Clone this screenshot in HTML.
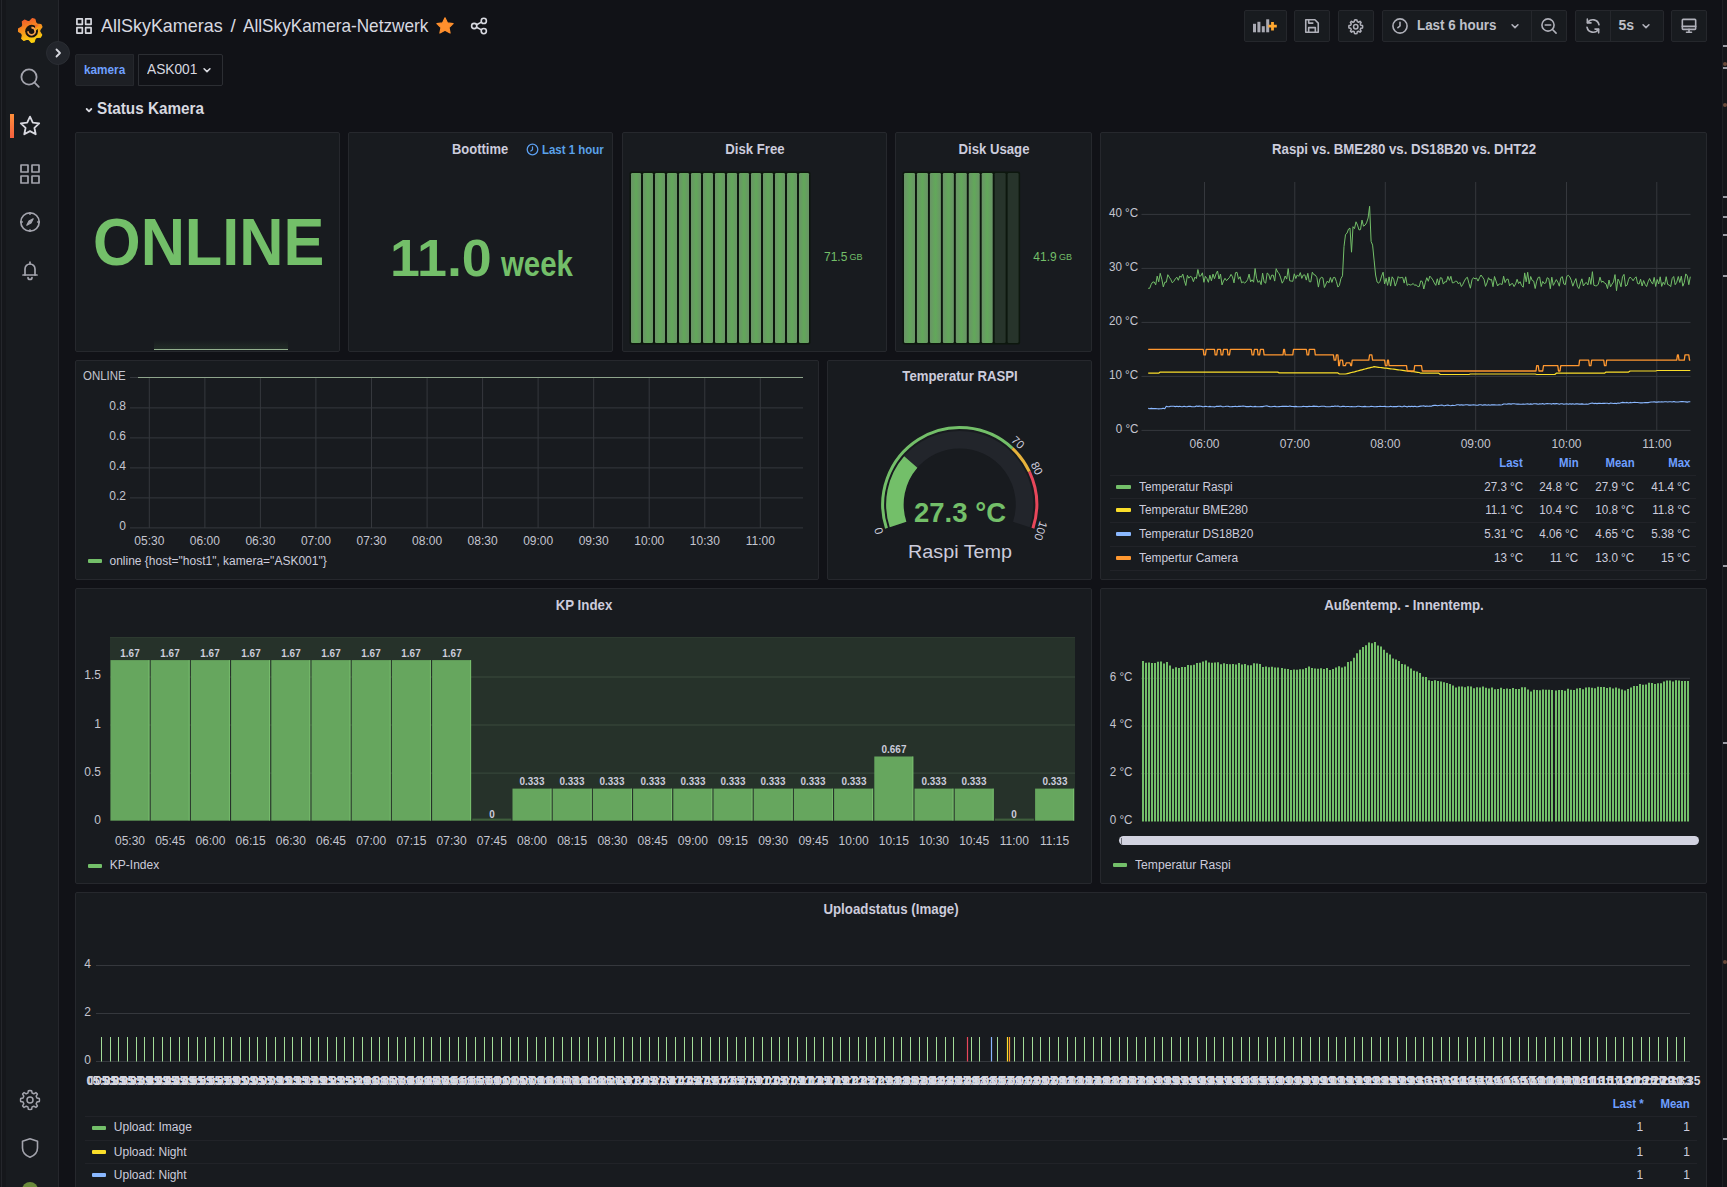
<!DOCTYPE html>
<html><head><meta charset="utf-8"><title>AllSkyKamera-Netzwerk</title>
<style>
html,body{margin:0;padding:0;width:1727px;height:1187px;overflow:hidden;background:#111217;font-family:"Liberation Sans", sans-serif;}
.t{position:absolute;white-space:nowrap;font-family:"Liberation Sans", sans-serif;}
svg{display:block;overflow:visible}
</style></head><body>
<div style="position:absolute;left:0px;top:0px;width:6px;height:1187px;background:#15171b;"></div><div style="position:absolute;left:1px;top:0px;width:1px;height:1187px;background:#24262b;"></div><div style="position:absolute;left:1722px;top:0px;width:5px;height:1187px;background:#141519;"></div><div style="position:absolute;left:1722px;top:0px;width:1px;height:1187px;background:#1f2024;"></div><div style="position:absolute;left:1723px;top:45px;width:4px;height:2px;background:#9a9ba3;"></div><div style="position:absolute;left:1723px;top:67px;width:4px;height:2px;background:#9a9ba3;"></div><div style="position:absolute;left:1723px;top:196px;width:4px;height:2px;background:#9a9ba3;"></div><div style="position:absolute;left:1723px;top:216px;width:4px;height:2px;background:#9a9ba3;"></div><div style="position:absolute;left:1723px;top:234px;width:4px;height:2px;background:#9a9ba3;"></div><div style="position:absolute;left:1723px;top:275px;width:4px;height:2px;background:#9a9ba3;"></div><div style="position:absolute;left:1723px;top:565px;width:4px;height:2px;background:#9a9ba3;"></div><div style="position:absolute;left:1723px;top:742px;width:4px;height:2px;background:#9a9ba3;"></div><div style="position:absolute;left:1723px;top:1138px;width:4px;height:2px;background:#9a9ba3;"></div><div style="position:absolute;left:1723px;top:62px;width:4px;height:4px;background:#6a4a3a;border-radius:2px;"></div><div style="position:absolute;left:1723px;top:103px;width:4px;height:4px;background:#6a4a3a;border-radius:2px;"></div><div style="position:absolute;left:1723px;top:960px;width:4px;height:4px;background:#6a4a3a;border-radius:2px;"></div><div style="position:absolute;left:6px;top:0px;width:52px;height:1187px;background:#181b1f;"></div><div style="position:absolute;left:58px;top:0px;width:1px;height:1187px;background:#25272c;"></div><svg style="position:absolute;left:17.5px;top:17.5px;" width="25" height="25" viewBox="0 0 25 25">
<defs><linearGradient id="lg" x1="0" y1="0" x2="0.3" y2="1">
<stop offset="0" stop-color="#f04e2e"/><stop offset="0.55" stop-color="#f7941d"/><stop offset="1" stop-color="#fcd00e"/></linearGradient></defs>
<path fill="url(#lg)" stroke="url(#lg)" stroke-width="1.2" stroke-linejoin="round" d="M14.29 0.63 L16.89 1.33 L17.74 4.82 L19.32 6.18 L22.89 6.50 L23.97 8.97 L21.77 11.81 L21.70 13.89 L23.67 16.89 L22.41 19.26 L18.82 19.32 L17.15 20.56 L16.03 23.97 L13.39 24.47 L11.11 21.70 L9.10 21.16 L5.74 22.41 L3.70 20.66 L4.44 17.15 L3.61 15.24 L0.53 13.39 L0.63 10.71 L3.84 9.10 L4.82 7.26 L4.34 3.70 L6.50 2.11 L9.76 3.61 L11.81 3.23 Z"/>
<circle cx="13.6" cy="13.2" r="6.4" fill="#1a1410"/>
<path d="M13.6 13.2 m-3.6 0 a3.6 3.6 0 1 0 3.6 -3.6" fill="none" stroke="#f6a04d" stroke-width="1.7"/>
<path d="M13.6 9.6 a3.6 3.6 0 0 1 3.6 3.6" fill="none" stroke="#f6a04d" stroke-width="1.7"/>
<path d="M17.2 13.2 L20 10.5 L20.5 7 L17 6.8 Z" fill="url(#lg)"/>
<circle cx="13.6" cy="13.2" r="1.7" fill="#1a1410"/>
</svg><div style="position:absolute;left:46px;top:41px;width:24px;height:24px;border-radius:50%;background:#22252b;box-sizing:border-box;border:1px solid #2a2d33"></div><svg style="position:absolute;left:52px;top:47px;" width="12" height="12" viewBox="0 0 12 12"><path d="M4.5 2.5 L8 6 L4.5 9.5" fill="none" stroke="#d8d9e0" stroke-width="1.8" stroke-linecap="round" stroke-linejoin="round"/></svg><svg style="position:absolute;left:18.0px;top:66.0px;" width="24" height="24" viewBox="0 0 24 24"><g fill="none" stroke="#a3a4ad" stroke-width="1.80" stroke-linecap="round" stroke-linejoin="round"><circle cx="11" cy="11" r="7.6"/><path d="M16.6 16.6 L20.8 20.8"/></g></svg><div style="position:absolute;left:10px;top:114px;width:4px;height:24px;background:linear-gradient(180deg,#ff8f3a,#f5603f);"></div><svg style="position:absolute;left:18.0px;top:114.0px;" width="24" height="24" viewBox="0 0 24 24"><g fill="none" stroke="#d8d9e0" stroke-width="1.80" stroke-linecap="round" stroke-linejoin="round"><path d="M12 2.6 L14.8 8.6 L21.2 9.4 L16.4 13.8 L17.7 20.3 L12 17.1 L6.3 20.3 L7.6 13.8 L2.8 9.4 L9.2 8.6 Z"/></g></svg><svg style="position:absolute;left:18.0px;top:162.0px;" width="24" height="24" viewBox="0 0 24 24"><g fill="none" stroke="#a3a4ad" stroke-width="1.70" stroke-linecap="round" stroke-linejoin="round"><rect x="3" y="3" width="7" height="7"/><rect x="14" y="3" width="7" height="7"/><rect x="3" y="14" width="7" height="7"/><rect x="14" y="14" width="7" height="7"/></g></svg><svg style="position:absolute;left:18.0px;top:210.0px;" width="24" height="24" viewBox="0 0 24 24"><g fill="none" stroke="#a3a4ad" stroke-width="1.70" stroke-linecap="round" stroke-linejoin="round"><circle cx="12" cy="12" r="9.2"/><path d="M15.2 8.8 L13 13 L8.8 15.2 L11 11 Z" fill="#a3a4ad" stroke-width="1.2"/><path d="M12 2.8 V4.4 M12 19.6 V21.2 M2.8 12 H4.4 M19.6 12 H21.2" stroke-width="1.4"/></g></svg><svg style="position:absolute;left:18.0px;top:258.0px;" width="24" height="24" viewBox="0 0 24 24"><g fill="none" stroke="#a3a4ad" stroke-width="1.70" stroke-linecap="round" stroke-linejoin="round"><path d="M7 17 V11 A5 5 0 0 1 17 11 V17"/><path d="M5 17 H19"/><path d="M10 19.5 A2 2 0 0 0 14 19.5"/><path d="M12 4.2 V6"/></g></svg><svg style="position:absolute;left:18.0px;top:1088.0px;" width="24" height="24" viewBox="0 0 24 24"><g fill="none" stroke="#a3a4ad" stroke-width="1.50" stroke-linecap="round" stroke-linejoin="round"><circle cx="12" cy="12" r="3"/><path d="M12 2.5 L13.6 2.7 L14.1 5 L15.8 5.8 L17.9 4.6 L19.2 5.8 L19.4 6.1 L18.2 8.2 L18.9 9.9 L21.3 10.4 L21.5 12 L21.3 13.6 L18.9 14.1 L18.2 15.8 L19.4 17.9 L18.2 19.2 L17.9 19.4 L15.8 18.2 L14.1 18.9 L13.6 21.3 L12 21.5 L10.4 21.3 L9.9 18.9 L8.2 18.2 L6.1 19.4 L4.8 18.2 L4.6 17.9 L5.8 15.8 L5.1 14.1 L2.7 13.6 L2.5 12 L2.7 10.4 L5.1 9.9 L5.8 8.2 L4.6 6.1 L5.8 4.8 L6.1 4.6 L8.2 5.8 L9.9 5.1 L10.4 2.7 Z"/></g></svg><svg style="position:absolute;left:18.0px;top:1136.0px;" width="24" height="24" viewBox="0 0 24 24"><g fill="none" stroke="#a3a4ad" stroke-width="1.60" stroke-linecap="round" stroke-linejoin="round"><path d="M12 2.8 L19.5 5.2 V12 C19.5 16.5 16.5 19.5 12 21.3 C7.5 19.5 4.5 16.5 4.5 12 V5.2 Z"/></g></svg><div style="position:absolute;left:22px;top:1182px;width:16px;height:16px;border-radius:50%;background:#6a8a3a"></div><svg style="position:absolute;left:74.0px;top:16.0px;" width="20" height="20" viewBox="0 0 24 24"><g fill="none" stroke="#d8d9e0" stroke-width="2.04" stroke-linecap="round" stroke-linejoin="round"><rect x="3.5" y="3.5" width="6.5" height="6.5"/><rect x="14" y="3.5" width="6.5" height="6.5"/><rect x="3.5" y="14" width="6.5" height="6.5"/><rect x="14" y="14" width="6.5" height="6.5"/></g></svg><div class="t" style="top:16.12px;font-size:19px;line-height:19px;color:#d8d9e0;left:101.00px;transform:scaleX(0.945);transform-origin:left center;">AllSkyKameras</div><div class="t" style="top:16.12px;font-size:19px;line-height:19px;color:#d8d9e0;left:230.50px;">/</div><div class="t" style="top:16.12px;font-size:19px;line-height:19px;color:#d8d9e0;left:243.00px;transform:scaleX(0.905);transform-origin:left center;">AllSkyKamera-Netzwerk</div><svg style="position:absolute;left:436px;top:17px;" width="18" height="17" viewBox="0 0 18 17"><path d="M9 0.8 L11.5 5.9 L17.1 6.6 L13 10.5 L14.1 16 L9 13.3 L3.9 16 L5 10.5 L0.9 6.6 L6.5 5.9 Z" fill="#ff8f2d" stroke="#ff8f2d" stroke-width="1.2" stroke-linejoin="round"/></svg><svg style="position:absolute;left:470px;top:17px;" width="18" height="18" viewBox="0 0 18 18"><g fill="none" stroke="#d8d9e0" stroke-width="1.6"><circle cx="13.8" cy="3.9" r="2.6"/><circle cx="4.2" cy="9" r="2.6"/><circle cx="13.8" cy="14.1" r="2.6"/><path d="M6.5 7.8 L11.5 5.1 M6.5 10.2 L11.5 12.9"/></g></svg><div style="position:absolute;left:1244px;top:10px;width:43px;height:32px;box-sizing:border-box;background:#181b1f;border:1px solid #25272c;border-radius:2px;"></div><div style="position:absolute;left:1294px;top:10px;width:36px;height:32px;box-sizing:border-box;background:#181b1f;border:1px solid #25272c;border-radius:2px;"></div><div style="position:absolute;left:1338px;top:10px;width:36px;height:32px;box-sizing:border-box;background:#181b1f;border:1px solid #25272c;border-radius:2px;"></div><div style="position:absolute;left:1382px;top:10px;width:185px;height:32px;box-sizing:border-box;background:#181b1f;border:1px solid #25272c;border-radius:2px;"></div><div style="position:absolute;left:1531px;top:11px;width:1px;height:30px;background:#25272c;"></div><div style="position:absolute;left:1575px;top:10px;width:89px;height:32px;box-sizing:border-box;background:#181b1f;border:1px solid #25272c;border-radius:2px;"></div><div style="position:absolute;left:1610px;top:11px;width:1px;height:30px;background:#25272c;"></div><div style="position:absolute;left:1671px;top:10px;width:36px;height:32px;box-sizing:border-box;background:#181b1f;border:1px solid #25272c;border-radius:2px;"></div><svg style="position:absolute;left:1250px;top:16px;" width="30" height="20" viewBox="0 0 30 20"><g fill="#a9aab3"><rect x="3" y="7.8" width="3" height="8.5"/><rect x="7.4" y="5.8" width="3" height="10.5"/><rect x="11.8" y="10.2" width="3" height="6.1"/><rect x="16.2" y="3.3" width="3" height="13"/></g><path d="M22.5 6 V14.5 M18.3 10.2 H26.8" stroke="#ffa830" stroke-width="2.8"/></svg><svg style="position:absolute;left:1302.0px;top:16.0px;" width="20" height="20" viewBox="0 0 24 24"><g fill="none" stroke="#b0b1ba" stroke-width="1.92" stroke-linecap="round" stroke-linejoin="round"><path d="M4.5 4.5 H15.5 L19.5 8.5 V19.5 H4.5 Z"/><path d="M8 19.5 V14 H16 V19.5"/><path d="M8 4.5 V8.5 H13"/></g></svg><svg style="position:absolute;left:1347.25px;top:17.55px;" width="17.5" height="17.5" viewBox="0 0 24 24"><g fill="none" stroke="#b0b1ba" stroke-width="2.06" stroke-linecap="round" stroke-linejoin="round"><circle cx="12" cy="12" r="3"/><path d="M12 2.5 L13.6 2.7 L14.1 5 L15.8 5.8 L17.9 4.6 L19.4 6.1 L18.2 8.2 L18.9 9.9 L21.3 10.4 L21.5 12 L21.3 13.6 L18.9 14.1 L18.2 15.8 L19.4 17.9 L17.9 19.4 L15.8 18.2 L14.1 18.9 L13.6 21.3 L12 21.5 L10.4 21.3 L9.9 18.9 L8.2 18.2 L6.1 19.4 L4.6 17.9 L5.8 15.8 L5.1 14.1 L2.7 13.6 L2.5 12 L2.7 10.4 L5.1 9.9 L5.8 8.2 L4.6 6.1 L6.1 4.6 L8.2 5.8 L9.9 5.1 L10.4 2.7 Z"/></g></svg><svg style="position:absolute;left:1390.0px;top:16.0px;" width="20" height="20" viewBox="0 0 24 24"><g fill="none" stroke="#b0b1ba" stroke-width="1.92" stroke-linecap="round" stroke-linejoin="round"><circle cx="12" cy="12" r="8.5"/><path d="M12 7.5 V12 L9.5 14"/></g></svg><div class="t" style="top:18.05px;font-size:14px;line-height:14px;color:#bfc0c9;font-weight:700;left:1417.00px;transform:scaleX(0.955);transform-origin:left center;">Last 6 hours</div><svg style="position:absolute;left:1505.0px;top:16.0px;" width="20" height="20" viewBox="0 0 24 24"><g fill="none" stroke="#b0b1ba" stroke-width="1.92" stroke-linecap="round" stroke-linejoin="round"><path d="M8.5 10.5 L12 14 L15.5 10.5"/></g></svg><svg style="position:absolute;left:1539.0px;top:16.0px;" width="20" height="20" viewBox="0 0 24 24"><g fill="none" stroke="#b0b1ba" stroke-width="1.92" stroke-linecap="round" stroke-linejoin="round"><circle cx="10.8" cy="10.8" r="7.3"/><path d="M16.2 16.2 L20.5 20.5 M7.5 10.8 H14"/></g></svg><svg style="position:absolute;left:1583.0px;top:16.0px;" width="20" height="20" viewBox="0 0 24 24"><g fill="none" stroke="#b0b1ba" stroke-width="1.92" stroke-linecap="round" stroke-linejoin="round"><path d="M19.2 10.5 A7.5 7.5 0 0 0 5.5 8 M4.8 13.5 A7.5 7.5 0 0 0 18.5 16"/><path d="M5.2 3.8 V8.3 H9.6 M18.8 20.2 V15.7 H14.4"/></g></svg><div class="t" style="top:18.05px;font-size:14px;line-height:14px;color:#bfc0c9;font-weight:700;left:1618.50px;">5s</div><svg style="position:absolute;left:1636.0px;top:16.0px;" width="20" height="20" viewBox="0 0 24 24"><g fill="none" stroke="#b0b1ba" stroke-width="1.92" stroke-linecap="round" stroke-linejoin="round"><path d="M8.5 10.5 L12 14 L15.5 10.5"/></g></svg><svg style="position:absolute;left:1679.0px;top:16.0px;" width="20" height="20" viewBox="0 0 24 24"><g fill="none" stroke="#b0b1ba" stroke-width="1.92" stroke-linecap="round" stroke-linejoin="round"><rect x="4" y="4" width="16" height="12" rx="1"/><path d="M4 12.5 H20 M9 19.5 H15 M12 16 V19.5"/></g></svg><div style="position:absolute;left:75px;top:54px;width:59px;height:32px;box-sizing:border-box;background:#1d1f24;border:1px solid #25272c;border-radius:2px 0 0 2px;"></div><div class="t" style="top:63.84px;font-size:12px;line-height:12px;color:#6e9fff;font-weight:700;left:84.00px;transform:scaleX(0.98);transform-origin:left center;">kamera</div><div style="position:absolute;left:138px;top:54px;width:85px;height:32px;box-sizing:border-box;background:#111217;border:1px solid #2c2e33;border-radius:0 2px 2px 0;"></div><div class="t" style="top:62.35px;font-size:14px;line-height:14px;color:#d8d9e0;left:147.00px;transform:scaleX(0.98);transform-origin:left center;">ASK001</div><svg style="position:absolute;left:197.0px;top:60.0px;" width="20" height="20" viewBox="0 0 24 24"><g fill="none" stroke="#d8d9e0" stroke-width="1.92" stroke-linecap="round" stroke-linejoin="round"><path d="M8.5 10.5 L12 14 L15.5 10.5"/></g></svg><svg style="position:absolute;left:81.0px;top:102.0px;" width="16" height="16" viewBox="0 0 24 24"><g fill="none" stroke="#d8d9e0" stroke-width="2.70" stroke-linecap="round" stroke-linejoin="round"><path d="M8.5 10.5 L12 14 L15.5 10.5"/></g></svg><div class="t" style="top:101.26px;font-size:16px;line-height:16px;color:#d8d9e0;font-weight:700;left:97.00px;transform:scaleX(0.955);transform-origin:left center;">Status Kamera</div><div style="position:absolute;left:75px;top:132px;width:265px;height:220px;box-sizing:border-box;background:#181b1f;border:1px solid #26282d;border-radius:2px;"></div><div class="t" style="top:209.43px;font-size:66px;line-height:66px;color:#73bf69;font-weight:700;left:93.00px;transform:scaleX(0.928);transform-origin:left center;">ONLINE</div><div style="position:absolute;left:154px;top:340px;width:134px;height:9px;background:linear-gradient(180deg,rgba(115,191,105,0) 0%,rgba(115,191,105,0.10) 100%);"></div><div style="position:absolute;left:153.8px;top:348.7px;width:134.5px;height:1.4px;background:#93b08e;"></div><div style="position:absolute;left:348px;top:132px;width:265px;height:220px;box-sizing:border-box;background:#181b1f;border:1px solid #26282d;border-radius:2px;"></div><div class="t" style="top:142.15px;font-size:14px;line-height:14px;color:#ccccdc;font-weight:700;left:451.50px;transform:scaleX(0.925);transform-origin:left center;">Boottime</div><svg style="position:absolute;left:525.5px;top:143px;" width="13" height="13" viewBox="0 0 13 13"><circle cx="6.5" cy="6.5" r="5.3" fill="none" stroke="#5b9ff0" stroke-width="1.3"/><path d="M6.5 3.8 V6.7 L4.8 8" fill="none" stroke="#5b9ff0" stroke-width="1.2" stroke-linecap="round"/></svg><div class="t" style="top:143.64px;font-size:12px;line-height:12px;color:#5aa2ea;font-weight:700;left:542.00px;transform:scaleX(0.955);transform-origin:left center;">Last 1 hour</div><div class="t" style="top:231.78px;font-size:52px;line-height:52px;color:#73bf69;font-weight:700;left:389.80px;transform:scaleX(1.035);transform-origin:left center;">11.0</div><div class="t" style="top:246.17px;font-size:35px;line-height:35px;color:#73bf69;font-weight:700;left:500.50px;transform:scaleX(0.84);transform-origin:left center;">week</div><div style="position:absolute;left:622px;top:132px;width:265px;height:220px;box-sizing:border-box;background:#181b1f;border:1px solid #26282d;border-radius:2px;"></div><div class="t" style="top:141.95px;font-size:14px;line-height:14px;color:#ccccdc;font-weight:700;left:754.50px;transform:translateX(-50%) scaleX(0.94);transform-origin:center center;">Disk Free</div><svg style="position:absolute;left:631px;top:173px;" width="180" height="170" viewBox="0 0 180 170"><defs><linearGradient id="lcdg" x1="0" y1="0" x2="1" y2="0"><stop offset="0" stop-color="#6a9467"/><stop offset="0.5" stop-color="#62a85a"/><stop offset="1" stop-color="#6a9467"/></linearGradient></defs><rect x="-1.5" y="-1.5" width="181.00" height="173" rx="2" fill="#0d170e"/><rect x="0.00" y="0" width="10" height="170" rx="1.2" fill="url(#lcdg)"/><rect x="12.00" y="0" width="10" height="170" rx="1.2" fill="url(#lcdg)"/><rect x="24.00" y="0" width="10" height="170" rx="1.2" fill="url(#lcdg)"/><rect x="36.00" y="0" width="10" height="170" rx="1.2" fill="url(#lcdg)"/><rect x="48.00" y="0" width="10" height="170" rx="1.2" fill="url(#lcdg)"/><rect x="60.00" y="0" width="10" height="170" rx="1.2" fill="url(#lcdg)"/><rect x="72.00" y="0" width="10" height="170" rx="1.2" fill="url(#lcdg)"/><rect x="84.00" y="0" width="10" height="170" rx="1.2" fill="url(#lcdg)"/><rect x="96.00" y="0" width="10" height="170" rx="1.2" fill="url(#lcdg)"/><rect x="108.00" y="0" width="10" height="170" rx="1.2" fill="url(#lcdg)"/><rect x="120.00" y="0" width="10" height="170" rx="1.2" fill="url(#lcdg)"/><rect x="132.00" y="0" width="10" height="170" rx="1.2" fill="url(#lcdg)"/><rect x="144.00" y="0" width="10" height="170" rx="1.2" fill="url(#lcdg)"/><rect x="156.00" y="0" width="10" height="170" rx="1.2" fill="url(#lcdg)"/><rect x="168.00" y="0" width="10" height="170" rx="1.2" fill="url(#lcdg)"/></svg><div class="t" style="top:250.84px;font-size:12px;line-height:12px;color:#73bf69;left:824.00px;">71.5</div><div class="t" style="top:253.38px;font-size:9px;line-height:9px;color:#73bf69;left:849.50px;">GB</div><div style="position:absolute;left:895px;top:132px;width:197px;height:220px;box-sizing:border-box;background:#181b1f;border:1px solid #26282d;border-radius:2px;"></div><div class="t" style="top:141.95px;font-size:14px;line-height:14px;color:#ccccdc;font-weight:700;left:993.50px;transform:translateX(-50%) scaleX(0.94);transform-origin:center center;">Disk Usage</div><svg style="position:absolute;left:904px;top:173px;" width="117" height="170" viewBox="0 0 117 170"><defs><linearGradient id="lcdg" x1="0" y1="0" x2="1" y2="0"><stop offset="0" stop-color="#6a9467"/><stop offset="0.5" stop-color="#62a85a"/><stop offset="1" stop-color="#6a9467"/></linearGradient></defs><rect x="-1.5" y="-1.5" width="117.60" height="173" rx="2" fill="#0d170e"/><rect x="0.00" y="0" width="11" height="170" rx="1.2" fill="url(#lcdg)"/><rect x="12.95" y="0" width="11" height="170" rx="1.2" fill="url(#lcdg)"/><rect x="25.90" y="0" width="11" height="170" rx="1.2" fill="url(#lcdg)"/><rect x="38.85" y="0" width="11" height="170" rx="1.2" fill="url(#lcdg)"/><rect x="51.80" y="0" width="11" height="170" rx="1.2" fill="url(#lcdg)"/><rect x="64.75" y="0" width="11" height="170" rx="1.2" fill="url(#lcdg)"/><rect x="77.70" y="0" width="11" height="170" rx="1.2" fill="url(#lcdg)"/><rect x="90.65" y="0" width="11" height="170" rx="1.2" fill="#27342b"/><rect x="103.60" y="0" width="11" height="170" rx="1.2" fill="#27342b"/></svg><div class="t" style="top:250.84px;font-size:12px;line-height:12px;color:#73bf69;left:1033.30px;">41.9</div><div class="t" style="top:253.38px;font-size:9px;line-height:9px;color:#73bf69;left:1059.00px;">GB</div><div style="position:absolute;left:1100px;top:132px;width:607px;height:448px;box-sizing:border-box;background:#181b1f;border:1px solid #26282d;border-radius:2px;"></div><div class="t" style="top:141.95px;font-size:14px;line-height:14px;color:#ccccdc;font-weight:700;left:1403.50px;transform:translateX(-50%) scaleX(0.945);transform-origin:center center;">Raspi vs. BME280 vs. DS18B20 vs. DHT22</div><svg style="position:absolute;left:0px;top:0px;pointer-events:none;" width="1727" height="1187" viewBox="0 0 1727 1187"><line x1="1141.5" y1="430.4" x2="1690.5" y2="430.4" stroke="#35383d" stroke-width="1"/><line x1="1141.5" y1="376.4" x2="1690.5" y2="376.4" stroke="#35383d" stroke-width="1"/><line x1="1141.5" y1="322.4" x2="1690.5" y2="322.4" stroke="#35383d" stroke-width="1"/><line x1="1141.5" y1="268.4" x2="1690.5" y2="268.4" stroke="#35383d" stroke-width="1"/><line x1="1141.5" y1="214.4" x2="1690.5" y2="214.4" stroke="#35383d" stroke-width="1"/><line x1="1204.5" y1="182" x2="1204.5" y2="431" stroke="#35383d" stroke-width="1"/><line x1="1294.8" y1="182" x2="1294.8" y2="431" stroke="#35383d" stroke-width="1"/><line x1="1385.3" y1="182" x2="1385.3" y2="431" stroke="#35383d" stroke-width="1"/><line x1="1475.7" y1="182" x2="1475.7" y2="431" stroke="#35383d" stroke-width="1"/><line x1="1566.5" y1="182" x2="1566.5" y2="431" stroke="#35383d" stroke-width="1"/><line x1="1656.8" y1="182" x2="1656.8" y2="431" stroke="#35383d" stroke-width="1"/></svg><div class="t" style="top:422.54px;font-size:12px;line-height:12px;color:#c4c5cf;right:589.00px;transform:scaleX(0.97);transform-origin:right center;">0 °C</div><div class="t" style="top:368.54px;font-size:12px;line-height:12px;color:#c4c5cf;right:589.00px;transform:scaleX(0.97);transform-origin:right center;">10 °C</div><div class="t" style="top:314.54px;font-size:12px;line-height:12px;color:#c4c5cf;right:589.00px;transform:scaleX(0.97);transform-origin:right center;">20 °C</div><div class="t" style="top:260.54px;font-size:12px;line-height:12px;color:#c4c5cf;right:589.00px;transform:scaleX(0.97);transform-origin:right center;">30 °C</div><div class="t" style="top:206.54px;font-size:12px;line-height:12px;color:#c4c5cf;right:589.00px;transform:scaleX(0.97);transform-origin:right center;">40 °C</div><div class="t" style="top:438.04px;font-size:12px;line-height:12px;color:#c4c5cf;left:1204.50px;transform:translateX(-50%);transform-origin:center center;">06:00</div><div class="t" style="top:438.04px;font-size:12px;line-height:12px;color:#c4c5cf;left:1294.80px;transform:translateX(-50%);transform-origin:center center;">07:00</div><div class="t" style="top:438.04px;font-size:12px;line-height:12px;color:#c4c5cf;left:1385.30px;transform:translateX(-50%);transform-origin:center center;">08:00</div><div class="t" style="top:438.04px;font-size:12px;line-height:12px;color:#c4c5cf;left:1475.70px;transform:translateX(-50%);transform-origin:center center;">09:00</div><div class="t" style="top:438.04px;font-size:12px;line-height:12px;color:#c4c5cf;left:1566.50px;transform:translateX(-50%);transform-origin:center center;">10:00</div><div class="t" style="top:438.04px;font-size:12px;line-height:12px;color:#c4c5cf;left:1656.80px;transform:translateX(-50%);transform-origin:center center;">11:00</div><svg style="position:absolute;left:0px;top:0px;pointer-events:none;" width="1727" height="1187" viewBox="0 0 1727 1187"><polyline points="1148.2,408.4 1149.7,408.8 1151.2,408.4 1152.7,408.6 1154.2,408.6 1155.7,408.6 1157.2,408.7 1158.7,408.9 1160.2,408.7 1161.8,408.6 1163.3,408.2 1164.8,408.8 1166.3,406.2 1167.8,406.7 1169.3,406.6 1170.8,406.3 1172.3,406.3 1173.8,406.3 1175.3,406.6 1176.8,406.3 1178.3,406.6 1179.8,406.3 1181.3,406.7 1182.8,406.6 1184.3,406.3 1185.8,406.8 1187.4,406.6 1188.9,406.3 1190.4,406.4 1191.9,406.8 1193.4,406.8 1194.9,406.8 1196.4,406.0 1197.9,406.4 1199.4,406.1 1200.9,406.3 1202.4,406.6 1203.9,406.7 1205.4,406.2 1206.9,406.5 1208.4,406.7 1209.9,406.4 1211.4,406.7 1213.0,406.7 1214.5,406.9 1216.0,406.4 1217.5,406.3 1219.0,406.4 1220.5,406.0 1222.0,406.6 1223.5,406.7 1225.0,406.5 1226.5,406.2 1228.0,406.2 1229.5,406.6 1231.0,406.7 1232.5,406.6 1234.0,406.5 1235.5,406.3 1237.0,406.7 1238.5,406.3 1240.1,406.4 1241.6,406.3 1243.1,406.1 1244.6,406.2 1246.1,406.6 1247.6,406.6 1249.1,406.6 1250.6,406.3 1252.1,406.8 1253.6,406.7 1255.1,406.4 1256.6,406.7 1258.1,406.8 1259.6,406.8 1261.1,406.5 1262.6,406.6 1264.1,406.2 1265.7,406.0 1267.2,405.9 1268.7,406.4 1270.2,406.8 1271.7,406.8 1273.2,406.5 1274.7,406.4 1276.2,406.6 1277.7,406.7 1279.2,406.6 1280.7,406.5 1282.2,406.4 1283.7,406.4 1285.2,406.3 1286.7,406.4 1288.2,406.5 1289.7,406.0 1291.3,406.4 1292.8,406.5 1294.3,406.6 1295.8,406.4 1297.3,406.7 1298.8,406.7 1300.3,406.7 1301.8,406.8 1303.3,406.3 1304.8,406.5 1306.3,406.6 1307.8,406.6 1309.3,406.2 1310.8,406.5 1312.3,406.4 1313.8,406.1 1315.3,406.4 1316.9,406.2 1318.4,406.8 1319.9,406.5 1321.4,406.3 1322.9,406.3 1324.4,406.3 1325.9,406.8 1327.4,406.7 1328.9,406.8 1330.4,406.7 1331.9,406.2 1333.4,406.5 1334.9,406.0 1336.4,406.3 1337.9,406.0 1339.4,406.6 1340.9,406.7 1342.5,406.4 1344.0,406.2 1345.5,406.8 1347.0,406.5 1348.5,406.5 1350.0,406.7 1351.5,406.6 1353.0,406.8 1354.5,406.7 1356.0,406.7 1357.5,406.2 1359.0,406.2 1360.5,406.5 1362.0,406.8 1363.5,406.6 1365.0,406.4 1366.5,406.7 1368.1,406.7 1369.6,406.7 1371.1,406.3 1372.6,406.5 1374.1,406.8 1375.6,406.8 1377.1,406.6 1378.6,406.5 1380.1,406.2 1381.6,406.5 1383.1,406.5 1384.6,406.4 1386.1,406.6 1387.6,406.7 1389.1,406.7 1390.6,406.2 1392.1,406.7 1393.7,406.5 1395.2,406.6 1396.7,406.6 1398.2,406.3 1399.7,406.2 1401.2,406.6 1402.7,406.7 1404.2,406.1 1405.7,406.5 1407.2,406.9 1408.7,406.3 1410.2,406.6 1411.7,406.3 1413.2,406.6 1414.7,406.3 1416.2,406.6 1417.7,406.8 1419.2,406.4 1420.8,406.1 1422.3,406.0 1423.8,405.8 1425.3,406.4 1426.8,406.0 1428.3,406.2 1429.8,406.1 1431.3,406.3 1432.8,405.6 1434.3,405.4 1435.8,405.2 1437.3,405.7 1438.8,405.5 1440.3,405.3 1441.8,405.1 1443.3,405.6 1444.8,405.7 1446.4,405.2 1447.9,405.1 1449.4,405.5 1450.9,405.7 1452.4,405.2 1453.9,405.5 1455.4,405.2 1456.9,404.8 1458.4,404.7 1459.9,405.1 1461.4,404.7 1462.9,405.1 1464.4,405.0 1465.9,404.7 1467.4,404.7 1468.9,405.1 1470.4,405.1 1472.0,405.0 1473.5,404.9 1475.0,405.0 1476.5,405.2 1478.0,405.1 1479.5,404.8 1481.0,404.7 1482.5,405.2 1484.0,404.9 1485.5,404.7 1487.0,405.2 1488.5,404.7 1490.0,405.2 1491.5,404.8 1493.0,404.9 1494.5,404.8 1496.0,405.0 1497.6,405.0 1499.1,404.9 1500.6,405.0 1502.1,404.8 1503.6,404.0 1505.1,404.0 1506.6,404.2 1508.1,403.9 1509.6,403.9 1511.1,404.1 1512.6,403.8 1514.1,403.8 1515.6,404.0 1517.1,404.1 1518.6,404.0 1520.1,404.2 1521.6,404.2 1523.2,404.0 1524.7,404.2 1526.2,404.0 1527.7,403.9 1529.2,404.2 1530.7,403.9 1532.2,404.2 1533.7,403.8 1535.2,403.8 1536.7,403.9 1538.2,404.2 1539.7,403.9 1541.2,404.0 1542.7,403.6 1544.2,404.2 1545.7,403.7 1547.2,403.6 1548.8,403.8 1550.3,403.7 1551.8,404.1 1553.3,403.6 1554.8,403.9 1556.3,403.6 1557.8,403.7 1559.3,404.2 1560.8,403.8 1562.3,403.7 1563.8,404.2 1565.3,404.0 1566.8,403.8 1568.3,404.2 1569.8,403.7 1571.3,404.1 1572.8,403.7 1574.4,404.2 1575.9,403.9 1577.4,403.7 1578.9,404.1 1580.4,404.1 1581.9,403.9 1583.4,404.1 1584.9,404.2 1586.4,404.1 1587.9,404.2 1589.4,403.7 1590.9,403.3 1592.4,403.1 1593.9,403.6 1595.4,403.2 1596.9,403.6 1598.4,403.4 1600.0,403.3 1601.5,403.5 1603.0,403.2 1604.5,403.4 1606.0,403.3 1607.5,403.2 1609.0,403.7 1610.5,403.1 1612.0,403.3 1613.5,403.5 1615.0,403.2 1616.5,403.6 1618.0,403.1 1619.5,403.3 1621.0,402.7 1622.5,402.4 1624.0,402.6 1625.5,402.8 1627.1,402.4 1628.6,402.9 1630.1,402.4 1631.6,402.7 1633.1,402.5 1634.6,402.3 1636.1,402.5 1637.6,402.5 1639.1,402.7 1640.6,402.9 1642.1,402.9 1643.6,402.8 1645.1,402.5 1646.6,402.6 1648.1,402.6 1649.6,402.3 1651.1,402.0 1652.7,402.0 1654.2,401.7 1655.7,402.1 1657.2,402.1 1658.7,401.9 1660.2,402.0 1661.7,401.9 1663.2,402.0 1664.7,401.7 1666.2,401.7 1667.7,402.0 1669.2,401.7 1670.7,401.8 1672.2,402.0 1673.7,401.5 1675.2,401.9 1676.7,402.0 1678.3,402.0 1679.8,401.7 1681.3,401.5 1682.8,401.6 1684.3,401.8 1685.8,401.9 1687.3,402.1 1688.8,401.7 1690.3,401.7" fill="none" stroke="#8ab8ff" stroke-width="1.1" stroke-linejoin="round"/><polyline points="1148.2,373.2 1149.7,373.2 1151.2,373.2 1152.7,373.2 1154.2,373.2 1155.7,373.2 1157.2,373.2 1158.7,373.2 1160.2,372.1 1161.8,372.1 1163.3,372.1 1164.8,372.1 1166.3,372.1 1167.8,372.1 1169.3,372.1 1170.8,372.1 1172.3,372.1 1173.8,372.1 1175.3,372.1 1176.8,372.1 1178.3,372.1 1179.8,372.1 1181.3,372.1 1182.8,372.1 1184.3,372.1 1185.8,372.1 1187.4,372.1 1188.9,372.1 1190.4,372.1 1191.9,372.1 1193.4,372.1 1194.9,372.1 1196.4,372.1 1197.9,372.1 1199.4,372.1 1200.9,372.1 1202.4,372.1 1203.9,372.1 1205.4,372.1 1206.9,372.1 1208.4,372.1 1209.9,372.1 1211.4,372.1 1213.0,372.1 1214.5,372.1 1216.0,372.1 1217.5,372.1 1219.0,372.1 1220.5,372.1 1222.0,372.1 1223.5,372.1 1225.0,372.1 1226.5,372.1 1228.0,372.1 1229.5,372.1 1231.0,372.1 1232.5,372.1 1234.0,372.1 1235.5,372.1 1237.0,372.1 1238.5,372.1 1240.1,372.1 1241.6,372.1 1243.1,372.1 1244.6,372.1 1246.1,372.1 1247.6,372.1 1249.1,372.1 1250.6,372.1 1252.1,372.1 1253.6,372.1 1255.1,372.1 1256.6,372.1 1258.1,372.1 1259.6,372.1 1261.1,372.1 1262.6,372.1 1264.1,372.1 1265.7,372.1 1267.2,372.1 1268.7,372.1 1270.2,372.1 1271.7,372.1 1273.2,372.1 1274.7,372.1 1276.2,372.1 1277.7,372.1 1279.2,372.9 1280.7,372.9 1282.2,372.9 1283.7,372.9 1285.2,372.9 1286.7,372.9 1288.2,372.9 1289.7,372.9 1291.3,372.9 1292.8,372.9 1294.3,372.9 1295.8,372.9 1297.3,372.9 1298.8,372.9 1300.3,372.9 1301.8,372.9 1303.3,372.9 1304.8,372.9 1306.3,372.9 1307.8,372.9 1309.3,372.9 1310.8,372.9 1312.3,372.9 1313.8,372.9 1315.3,372.9 1316.9,372.9 1318.4,372.9 1319.9,372.9 1321.4,372.9 1322.9,372.9 1324.4,372.9 1325.9,372.9 1327.4,372.9 1328.9,372.9 1330.4,372.9 1331.9,372.9 1333.4,372.9 1334.9,372.9 1336.4,372.9 1337.9,372.9 1339.4,374.0 1340.9,374.0 1342.5,374.0 1344.0,374.0 1345.5,374.0 1347.0,373.7 1348.5,373.3 1350.0,372.9 1351.5,372.5 1353.0,372.1 1354.5,371.8 1356.0,371.4 1357.5,371.0 1359.0,370.6 1360.5,370.2 1362.0,369.8 1363.5,369.4 1365.0,369.0 1366.5,368.6 1368.1,368.2 1369.6,367.8 1371.1,367.4 1372.6,367.1 1374.1,366.7 1375.6,366.9 1377.1,367.1 1378.6,367.3 1380.1,367.5 1381.6,367.7 1383.1,367.9 1384.6,368.1 1386.1,368.2 1387.6,368.4 1389.1,368.6 1390.6,368.8 1392.1,369.0 1393.7,369.2 1395.2,369.4 1396.7,369.6 1398.2,369.8 1399.7,370.0 1401.2,370.2 1402.7,370.4 1404.2,370.6 1405.7,370.8 1407.2,371.0 1408.7,371.2 1410.2,371.4 1411.7,371.6 1413.2,371.7 1414.7,371.9 1416.2,372.1 1417.7,372.3 1419.2,372.5 1420.8,373.2 1422.3,373.2 1423.8,373.2 1425.3,373.2 1426.8,373.2 1428.3,373.2 1429.8,373.2 1431.3,373.2 1432.8,373.2 1434.3,373.2 1435.8,373.2 1437.3,373.2 1438.8,373.2 1440.3,374.5 1441.8,374.5 1443.3,374.5 1444.8,374.5 1446.4,374.5 1447.9,374.5 1449.4,374.5 1450.9,374.5 1452.4,374.5 1453.9,374.5 1455.4,374.5 1456.9,374.5 1458.4,374.5 1459.9,374.5 1461.4,374.5 1462.9,374.5 1464.4,374.5 1465.9,374.5 1467.4,374.5 1468.9,374.5 1470.4,374.0 1472.0,374.0 1473.5,374.0 1475.0,374.0 1476.5,374.0 1478.0,374.0 1479.5,374.0 1481.0,374.0 1482.5,374.0 1484.0,374.0 1485.5,374.0 1487.0,374.0 1488.5,374.0 1490.0,374.0 1491.5,374.0 1493.0,374.0 1494.5,374.0 1496.0,374.0 1497.6,374.0 1499.1,374.0 1500.6,374.0 1502.1,374.0 1503.6,374.0 1505.1,374.0 1506.6,374.0 1508.1,374.0 1509.6,374.0 1511.1,374.0 1512.6,374.0 1514.1,374.0 1515.6,374.0 1517.1,374.0 1518.6,374.0 1520.1,374.0 1521.6,374.0 1523.2,374.0 1524.7,374.0 1526.2,374.0 1527.7,374.0 1529.2,374.0 1530.7,374.0 1532.2,374.0 1533.7,374.0 1535.2,374.0 1536.7,374.5 1538.2,374.5 1539.7,374.5 1541.2,374.5 1542.7,374.5 1544.2,374.5 1545.7,374.5 1547.2,374.5 1548.8,374.5 1550.3,374.5 1551.8,374.5 1553.3,374.5 1554.8,374.5 1556.3,373.2 1557.8,373.2 1559.3,373.2 1560.8,373.2 1562.3,373.2 1563.8,373.2 1565.3,373.2 1566.8,373.2 1568.3,373.2 1569.8,373.2 1571.3,373.2 1572.8,373.2 1574.4,373.2 1575.9,373.2 1577.4,373.2 1578.9,373.2 1580.4,373.2 1581.9,373.2 1583.4,373.2 1584.9,373.2 1586.4,373.2 1587.9,373.2 1589.4,373.2 1590.9,373.2 1592.4,373.2 1593.9,373.2 1595.4,373.2 1596.9,373.2 1598.4,373.2 1600.0,373.2 1601.5,373.2 1603.0,373.2 1604.5,373.2 1606.0,372.1 1607.5,372.1 1609.0,372.1 1610.5,372.1 1612.0,372.1 1613.5,372.1 1615.0,372.1 1616.5,372.1 1618.0,372.1 1619.5,372.1 1621.0,372.1 1622.5,372.1 1624.0,372.1 1625.5,372.1 1627.1,372.1 1628.6,372.1 1630.1,371.0 1631.6,371.0 1633.1,371.0 1634.6,371.0 1636.1,371.0 1637.6,371.0 1639.1,371.0 1640.6,371.0 1642.1,371.0 1643.6,371.0 1645.1,371.0 1646.6,371.0 1648.1,371.0 1649.6,371.0 1651.1,371.0 1652.7,371.0 1654.2,371.0 1655.7,371.0 1657.2,370.5 1658.7,370.5 1660.2,370.5 1661.7,370.5 1663.2,370.5 1664.7,370.5 1666.2,370.5 1667.7,370.5 1669.2,370.5 1670.7,370.5 1672.2,370.5 1673.7,370.5 1675.2,370.5 1676.7,370.5 1678.3,370.5 1679.8,370.5 1681.3,370.5 1682.8,370.5 1684.3,370.5 1685.8,370.5 1687.3,370.5 1688.8,370.5 1690.3,370.5" fill="none" stroke="#fade2a" stroke-width="1.2" stroke-linejoin="round"/><polyline points="1148.2,349.4 1149.0,349.4 1149.7,349.4 1150.5,349.4 1151.2,349.4 1152.0,349.4 1152.7,349.4 1153.5,349.4 1154.2,349.4 1155.0,349.4 1155.7,349.4 1156.5,349.4 1157.2,349.4 1158.0,349.4 1158.7,349.4 1159.5,349.4 1160.2,349.4 1161.0,349.4 1161.8,349.4 1162.5,349.4 1163.3,349.4 1164.0,349.4 1164.8,349.4 1165.5,349.4 1166.3,349.4 1167.0,349.4 1167.8,349.4 1168.5,349.4 1169.3,349.4 1170.0,349.4 1170.8,349.4 1171.5,349.4 1172.3,349.4 1173.0,349.4 1173.8,349.4 1174.6,349.4 1175.3,349.4 1176.1,349.4 1176.8,349.4 1177.6,349.4 1178.3,349.4 1179.1,349.4 1179.8,349.4 1180.6,349.4 1181.3,349.4 1182.1,349.4 1182.8,349.4 1183.6,349.4 1184.3,349.4 1185.1,349.4 1185.8,349.4 1186.6,349.4 1187.4,349.4 1188.1,349.4 1188.9,349.4 1189.6,349.4 1190.4,349.4 1191.1,349.4 1191.9,349.4 1192.6,349.4 1193.4,349.4 1194.1,349.4 1194.9,349.4 1195.6,349.4 1196.4,349.4 1197.1,349.4 1197.9,349.4 1198.6,349.4 1199.4,349.4 1200.2,349.4 1200.9,349.4 1201.7,349.4 1202.4,349.4 1203.2,349.4 1203.9,354.8 1204.7,354.8 1205.4,354.8 1206.2,349.4 1206.9,349.4 1207.7,349.4 1208.4,349.4 1209.2,349.4 1209.9,349.4 1210.7,349.4 1211.4,349.4 1212.2,349.4 1213.0,349.4 1213.7,349.4 1214.5,349.4 1215.2,354.8 1216.0,354.8 1216.7,354.8 1217.5,349.4 1218.2,349.4 1219.0,349.4 1219.7,349.4 1220.5,349.4 1221.2,354.8 1222.0,354.8 1222.7,354.8 1223.5,349.4 1224.2,349.4 1225.0,349.4 1225.8,349.4 1226.5,349.4 1227.3,349.4 1228.0,354.8 1228.8,354.8 1229.5,354.8 1230.3,349.4 1231.0,349.4 1231.8,349.4 1232.5,349.4 1233.3,349.4 1234.0,349.4 1234.8,349.4 1235.5,349.4 1236.3,349.4 1237.0,349.4 1237.8,349.4 1238.5,349.4 1239.3,349.4 1240.1,349.4 1240.8,349.4 1241.6,349.4 1242.3,349.4 1243.1,349.4 1243.8,349.4 1244.6,349.4 1245.3,349.4 1246.1,349.4 1246.8,349.4 1247.6,349.4 1248.3,349.4 1249.1,349.4 1249.8,349.4 1250.6,349.4 1251.3,349.4 1252.1,354.8 1252.9,354.8 1253.6,354.8 1254.4,349.4 1255.1,349.4 1255.9,349.4 1256.6,349.4 1257.4,349.4 1258.1,354.8 1258.9,354.8 1259.6,354.8 1260.4,349.4 1261.1,349.4 1261.9,349.4 1262.6,349.4 1263.4,349.4 1264.1,354.8 1264.9,354.8 1265.7,354.8 1266.4,354.8 1267.2,354.8 1267.9,354.8 1268.7,354.8 1269.4,354.8 1270.2,354.8 1270.9,354.8 1271.7,354.8 1272.4,354.8 1273.2,354.8 1273.9,354.8 1274.7,354.8 1275.4,354.8 1276.2,354.8 1276.9,354.8 1277.7,354.8 1278.5,354.8 1279.2,354.8 1280.0,354.8 1280.7,354.8 1281.5,354.8 1282.2,354.8 1283.0,354.8 1283.7,349.4 1284.5,349.4 1285.2,354.8 1286.0,354.8 1286.7,354.8 1287.5,354.8 1288.2,354.8 1289.0,354.8 1289.7,354.8 1290.5,354.8 1291.3,354.8 1292.0,354.8 1292.8,354.8 1293.5,349.4 1294.3,349.4 1295.0,349.4 1295.8,349.4 1296.5,349.4 1297.3,349.4 1298.0,349.4 1298.8,349.4 1299.5,349.4 1300.3,349.4 1301.0,349.4 1301.8,349.4 1302.5,349.4 1303.3,349.4 1304.1,349.4 1304.8,349.4 1305.6,349.4 1306.3,349.4 1307.1,354.8 1307.8,354.8 1308.6,354.8 1309.3,349.4 1310.1,349.4 1310.8,349.4 1311.6,349.4 1312.3,349.4 1313.1,349.4 1313.8,349.4 1314.6,349.4 1315.3,354.8 1316.1,354.8 1316.9,354.8 1317.6,354.8 1318.4,354.8 1319.1,354.8 1319.9,354.8 1320.6,354.8 1321.4,354.8 1322.1,354.8 1322.9,354.8 1323.6,354.8 1324.4,354.8 1325.1,354.8 1325.9,354.8 1326.6,354.8 1327.4,354.8 1328.1,354.8 1328.9,354.8 1329.7,354.8 1330.4,354.8 1331.2,354.8 1331.9,354.8 1332.7,354.8 1333.4,354.8 1334.2,360.2 1334.9,360.2 1335.7,360.2 1336.4,354.8 1337.2,354.8 1337.9,354.8 1338.7,365.6 1339.4,365.6 1340.2,360.2 1340.9,360.2 1341.7,360.2 1342.5,360.2 1343.2,365.6 1344.0,365.6 1344.7,365.6 1345.5,365.6 1346.2,362.9 1347.0,362.9 1347.7,362.9 1348.5,362.9 1349.2,362.9 1350.0,362.9 1350.7,365.6 1351.5,365.6 1352.2,360.2 1353.0,360.2 1353.7,360.2 1354.5,360.2 1355.3,360.2 1356.0,360.2 1356.8,360.2 1357.5,360.2 1358.3,360.2 1359.0,360.2 1359.8,360.2 1360.5,360.2 1361.3,360.2 1362.0,360.2 1362.8,360.2 1363.5,360.2 1364.3,360.2 1365.0,360.2 1365.8,360.2 1366.5,360.2 1367.3,360.2 1368.1,360.2 1368.8,360.2 1369.6,354.8 1370.3,354.8 1371.1,354.8 1371.8,354.8 1372.6,360.2 1373.3,360.2 1374.1,360.2 1374.8,360.2 1375.6,360.2 1376.3,360.2 1377.1,360.2 1377.8,360.2 1378.6,360.2 1379.3,360.2 1380.1,360.2 1380.9,360.2 1381.6,360.2 1382.4,360.2 1383.1,360.2 1383.9,360.2 1384.6,360.2 1385.4,365.6 1386.1,365.6 1386.9,365.6 1387.6,360.2 1388.4,360.2 1389.1,365.6 1389.9,365.6 1390.6,365.6 1391.4,365.6 1392.1,365.6 1392.9,365.6 1393.7,365.6 1394.4,365.6 1395.2,365.6 1395.9,365.6 1396.7,365.6 1397.4,365.6 1398.2,365.6 1398.9,365.6 1399.7,365.6 1400.4,365.6 1401.2,365.6 1401.9,365.6 1402.7,365.6 1403.4,365.6 1404.2,365.6 1404.9,365.6 1405.7,365.6 1406.5,365.6 1407.2,371.0 1408.0,371.0 1408.7,371.0 1409.5,371.0 1410.2,371.0 1411.0,371.0 1411.7,371.0 1412.5,371.0 1413.2,371.0 1414.0,371.0 1414.7,365.6 1415.5,365.6 1416.2,365.6 1417.0,365.6 1417.7,365.6 1418.5,365.6 1419.2,365.6 1420.0,365.6 1420.8,365.6 1421.5,365.6 1422.3,371.0 1423.0,371.0 1423.8,371.0 1424.5,371.0 1425.3,371.0 1426.0,371.0 1426.8,371.0 1427.5,371.0 1428.3,371.0 1429.0,371.0 1429.8,371.0 1430.5,371.0 1431.3,371.0 1432.0,371.0 1432.8,371.0 1433.6,371.0 1434.3,371.0 1435.1,371.0 1435.8,371.0 1436.6,371.0 1437.3,371.0 1438.1,371.0 1438.8,371.0 1439.6,371.0 1440.3,371.0 1441.1,371.0 1441.8,371.0 1442.6,371.0 1443.3,371.0 1444.1,371.0 1444.8,371.0 1445.6,371.0 1446.4,371.0 1447.1,371.0 1447.9,371.0 1448.6,371.0 1449.4,371.0 1450.1,371.0 1450.9,371.0 1451.6,371.0 1452.4,371.0 1453.1,371.0 1453.9,371.0 1454.6,371.0 1455.4,371.0 1456.1,371.0 1456.9,371.0 1457.6,371.0 1458.4,371.0 1459.2,371.0 1459.9,371.0 1460.7,371.0 1461.4,371.0 1462.2,371.0 1462.9,371.0 1463.7,371.0 1464.4,371.0 1465.2,371.0 1465.9,371.0 1466.7,371.0 1467.4,371.0 1468.2,371.0 1468.9,371.0 1469.7,371.0 1470.4,371.0 1471.2,371.0 1472.0,371.0 1472.7,371.0 1473.5,371.0 1474.2,371.0 1475.0,371.0 1475.7,371.0 1476.5,371.0 1477.2,371.0 1478.0,371.0 1478.7,371.0 1479.5,371.0 1480.2,371.0 1481.0,371.0 1481.7,371.0 1482.5,371.0 1483.2,371.0 1484.0,371.0 1484.8,371.0 1485.5,371.0 1486.3,371.0 1487.0,371.0 1487.8,371.0 1488.5,371.0 1489.3,371.0 1490.0,371.0 1490.8,371.0 1491.5,371.0 1492.3,371.0 1493.0,371.0 1493.8,371.0 1494.5,371.0 1495.3,371.0 1496.0,371.0 1496.8,371.0 1497.6,371.0 1498.3,371.0 1499.1,371.0 1499.8,371.0 1500.6,371.0 1501.3,371.0 1502.1,371.0 1502.8,371.0 1503.6,371.0 1504.3,371.0 1505.1,371.0 1505.8,371.0 1506.6,371.0 1507.3,371.0 1508.1,371.0 1508.8,371.0 1509.6,371.0 1510.4,371.0 1511.1,371.0 1511.9,371.0 1512.6,371.0 1513.4,371.0 1514.1,371.0 1514.9,371.0 1515.6,371.0 1516.4,371.0 1517.1,371.0 1517.9,371.0 1518.6,371.0 1519.4,371.0 1520.1,371.0 1520.9,371.0 1521.6,371.0 1522.4,371.0 1523.2,371.0 1523.9,371.0 1524.7,371.0 1525.4,371.0 1526.2,371.0 1526.9,371.0 1527.7,371.0 1528.4,371.0 1529.2,371.0 1529.9,371.0 1530.7,371.0 1531.4,371.0 1532.2,371.0 1532.9,371.0 1533.7,371.0 1534.4,371.0 1535.2,371.0 1536.0,371.0 1536.7,365.6 1537.5,365.6 1538.2,365.6 1539.0,371.0 1539.7,371.0 1540.5,371.0 1541.2,371.0 1542.0,371.0 1542.7,371.0 1543.5,365.6 1544.2,365.6 1545.0,365.6 1545.7,365.6 1546.5,365.6 1547.2,365.6 1548.0,365.6 1548.8,365.6 1549.5,365.6 1550.3,365.6 1551.0,365.6 1551.8,365.6 1552.5,365.6 1553.3,365.6 1554.0,365.6 1554.8,365.6 1555.5,365.6 1556.3,365.6 1557.0,365.6 1557.8,365.6 1558.5,371.0 1559.3,371.0 1560.0,371.0 1560.8,365.6 1561.6,365.6 1562.3,365.6 1563.1,365.6 1563.8,365.6 1564.6,365.6 1565.3,365.6 1566.1,365.6 1566.8,365.6 1567.6,365.6 1568.3,365.6 1569.1,365.6 1569.8,365.6 1570.6,365.6 1571.3,365.6 1572.1,365.6 1572.8,365.6 1573.6,365.6 1574.4,365.6 1575.1,365.6 1575.9,365.6 1576.6,365.6 1577.4,365.6 1578.1,365.6 1578.9,365.6 1579.6,360.2 1580.4,360.2 1581.1,360.2 1581.9,360.2 1582.6,360.2 1583.4,360.2 1584.1,360.2 1584.9,360.2 1585.6,360.2 1586.4,360.2 1587.2,360.2 1587.9,360.2 1588.7,360.2 1589.4,365.6 1590.2,365.6 1590.9,365.6 1591.7,360.2 1592.4,360.2 1593.2,360.2 1593.9,360.2 1594.7,360.2 1595.4,360.2 1596.2,360.2 1596.9,360.2 1597.7,360.2 1598.4,360.2 1599.2,360.2 1600.0,360.2 1600.7,360.2 1601.5,360.2 1602.2,360.2 1603.0,360.2 1603.7,360.2 1604.5,365.6 1605.2,365.6 1606.0,365.6 1606.7,360.2 1607.5,360.2 1608.2,360.2 1609.0,360.2 1609.7,360.2 1610.5,360.2 1611.2,360.2 1612.0,360.2 1612.7,360.2 1613.5,360.2 1614.3,360.2 1615.0,360.2 1615.8,360.2 1616.5,360.2 1617.3,360.2 1618.0,360.2 1618.8,360.2 1619.5,360.2 1620.3,360.2 1621.0,360.2 1621.8,360.2 1622.5,360.2 1623.3,360.2 1624.0,360.2 1624.8,360.2 1625.5,360.2 1626.3,360.2 1627.1,360.2 1627.8,360.2 1628.6,360.2 1629.3,360.2 1630.1,360.2 1630.8,360.2 1631.6,360.2 1632.3,360.2 1633.1,360.2 1633.8,360.2 1634.6,360.2 1635.3,360.2 1636.1,360.2 1636.8,360.2 1637.6,360.2 1638.3,360.2 1639.1,360.2 1639.9,360.2 1640.6,360.2 1641.4,360.2 1642.1,360.2 1642.9,360.2 1643.6,360.2 1644.4,360.2 1645.1,360.2 1645.9,360.2 1646.6,360.2 1647.4,360.2 1648.1,360.2 1648.9,360.2 1649.6,360.2 1650.4,360.2 1651.1,360.2 1651.9,360.2 1652.7,360.2 1653.4,360.2 1654.2,360.2 1654.9,360.2 1655.7,360.2 1656.4,360.2 1657.2,360.2 1657.9,360.2 1658.7,360.2 1659.4,360.2 1660.2,360.2 1660.9,360.2 1661.7,360.2 1662.4,360.2 1663.2,360.2 1663.9,360.2 1664.7,360.2 1665.5,360.2 1666.2,360.2 1667.0,360.2 1667.7,360.2 1668.5,360.2 1669.2,360.2 1670.0,360.2 1670.7,360.2 1671.5,360.2 1672.2,360.2 1673.0,360.2 1673.7,360.2 1674.5,360.2 1675.2,360.2 1676.0,360.2 1676.7,360.2 1677.5,354.8 1678.3,354.8 1679.0,360.2 1679.8,360.2 1680.5,360.2 1681.3,360.2 1682.0,360.2 1682.8,360.2 1683.5,360.2 1684.3,360.2 1685.0,354.8 1685.8,354.8 1686.5,354.8 1687.3,354.8 1688.0,354.8 1688.8,354.8 1689.5,360.2 1690.3,360.2" fill="none" stroke="#ff9830" stroke-width="1.3" stroke-linejoin="round"/><polyline points="1148.2,288.3 1149.7,288.3 1151.2,284.3 1152.7,282.0 1154.2,282.0 1155.7,284.8 1157.2,276.1 1158.7,281.8 1160.2,273.3 1161.8,279.2 1163.3,286.9 1164.8,282.2 1166.3,282.2 1167.8,274.7 1169.3,277.2 1170.8,279.5 1172.3,282.8 1173.8,281.3 1175.3,278.9 1176.8,277.2 1178.3,280.3 1179.8,276.0 1181.3,277.3 1182.8,274.1 1184.3,280.4 1185.8,285.5 1187.4,275.3 1188.9,278.2 1190.4,276.3 1191.9,277.3 1193.4,281.7 1194.9,277.1 1196.4,278.6 1197.9,269.5 1199.4,276.3 1200.9,275.9 1202.4,272.8 1203.9,282.3 1205.4,276.3 1206.9,278.5 1208.4,282.3 1209.9,275.2 1211.4,280.8 1213.0,274.1 1214.5,278.7 1216.0,274.0 1217.5,271.0 1219.0,279.0 1220.5,274.0 1222.0,284.9 1223.5,281.0 1225.0,278.3 1226.5,280.7 1228.0,279.0 1229.5,277.4 1231.0,274.4 1232.5,276.8 1234.0,282.9 1235.5,272.7 1237.0,272.3 1238.5,279.2 1240.1,276.7 1241.6,282.8 1243.1,281.8 1244.6,283.0 1246.1,281.9 1247.6,279.6 1249.1,274.1 1250.6,281.9 1252.1,279.8 1253.6,282.2 1255.1,268.5 1256.6,278.3 1258.1,282.4 1259.6,280.7 1261.1,284.7 1262.6,273.2 1264.1,281.9 1265.7,283.2 1267.2,273.0 1268.7,274.3 1270.2,279.6 1271.7,275.2 1273.2,275.1 1274.7,281.1 1276.2,268.7 1277.7,272.2 1279.2,273.5 1280.7,277.9 1282.2,283.2 1283.7,280.5 1285.2,276.0 1286.7,279.1 1288.2,268.6 1289.7,280.8 1291.3,281.1 1292.8,281.3 1294.3,273.8 1295.8,278.5 1297.3,274.9 1298.8,276.4 1300.3,272.6 1301.8,278.4 1303.3,275.0 1304.8,274.9 1306.3,280.1 1307.8,273.3 1309.3,281.7 1310.8,281.9 1312.3,272.2 1313.8,274.6 1315.3,275.1 1316.9,277.6 1318.4,287.1 1319.9,279.0 1321.4,277.2 1322.9,277.9 1324.4,287.5 1325.9,284.1 1327.4,281.0 1328.9,282.8 1330.4,277.5 1331.9,282.4 1333.4,277.5 1334.9,277.4 1336.4,281.6 1337.9,287.1 1339.4,285.3 1340.9,278.7 1342.5,275.8 1344.0,246.5 1345.5,234.5 1347.0,233.2 1348.5,229.1 1350.0,228.1 1351.5,252.2 1353.0,226.7 1354.5,228.6 1356.0,221.8 1357.5,225.1 1359.0,229.9 1360.5,229.6 1362.0,220.1 1363.5,226.2 1365.0,225.2 1366.5,222.9 1368.1,218.0 1369.6,206.3 1371.1,241.4 1372.6,245.1 1374.1,260.1 1375.6,275.0 1377.1,282.0 1378.6,283.2 1380.1,281.2 1381.6,276.1 1383.1,272.2 1384.6,283.9 1386.1,278.3 1387.6,285.4 1389.1,276.9 1390.6,286.1 1392.1,276.8 1393.7,279.2 1395.2,286.1 1396.7,282.2 1398.2,276.6 1399.7,278.1 1401.2,277.5 1402.7,277.4 1404.2,283.1 1405.7,276.8 1407.2,285.4 1408.7,284.2 1410.2,285.0 1411.7,284.6 1413.2,283.5 1414.7,285.4 1416.2,284.8 1417.7,286.6 1419.2,286.6 1420.8,280.8 1422.3,281.6 1423.8,289.0 1425.3,282.7 1426.8,277.7 1428.3,281.3 1429.8,276.1 1431.3,277.8 1432.8,279.9 1434.3,283.0 1435.8,285.4 1437.3,278.8 1438.8,285.0 1440.3,277.7 1441.8,278.0 1443.3,284.1 1444.8,281.8 1446.4,281.9 1447.9,276.4 1449.4,280.4 1450.9,276.3 1452.4,282.9 1453.9,282.6 1455.4,281.3 1456.9,281.3 1458.4,283.9 1459.9,282.4 1461.4,286.5 1462.9,284.2 1464.4,281.0 1465.9,278.3 1467.4,277.3 1468.9,283.2 1470.4,288.2 1472.0,279.8 1473.5,277.7 1475.0,278.9 1476.5,278.0 1478.0,281.1 1479.5,277.7 1481.0,275.0 1482.5,277.1 1484.0,279.3 1485.5,286.4 1487.0,282.9 1488.5,277.7 1490.0,280.0 1491.5,279.4 1493.0,286.7 1494.5,276.5 1496.0,281.0 1497.6,286.0 1499.1,284.0 1500.6,283.9 1502.1,284.5 1503.6,276.2 1505.1,282.6 1506.6,279.4 1508.1,279.1 1509.6,285.9 1511.1,284.0 1512.6,283.5 1514.1,286.6 1515.6,283.9 1517.1,279.3 1518.6,283.6 1520.1,281.7 1521.6,285.5 1523.2,287.2 1524.7,272.9 1526.2,281.8 1527.7,272.3 1529.2,283.9 1530.7,276.5 1532.2,280.5 1533.7,281.1 1535.2,288.5 1536.7,281.2 1538.2,277.4 1539.7,277.1 1541.2,286.5 1542.7,281.4 1544.2,283.5 1545.7,283.0 1547.2,277.7 1548.8,278.7 1550.3,288.7 1551.8,277.2 1553.3,285.4 1554.8,282.5 1556.3,279.6 1557.8,282.1 1559.3,286.2 1560.8,277.7 1562.3,276.7 1563.8,283.9 1565.3,284.7 1566.8,276.4 1568.3,275.3 1569.8,276.9 1571.3,280.4 1572.8,286.2 1574.4,281.9 1575.9,278.6 1577.4,286.2 1578.9,288.6 1580.4,283.0 1581.9,278.8 1583.4,286.0 1584.9,283.5 1586.4,282.5 1587.9,285.0 1589.4,277.0 1590.9,284.4 1592.4,271.7 1593.9,285.3 1595.4,285.8 1596.9,285.8 1598.4,284.0 1600.0,277.2 1601.5,282.3 1603.0,281.1 1604.5,283.1 1606.0,283.8 1607.5,288.6 1609.0,280.0 1610.5,286.9 1612.0,284.1 1613.5,281.9 1615.0,274.6 1616.5,290.7 1618.0,279.1 1619.5,281.9 1621.0,286.8 1622.5,276.8 1624.0,274.4 1625.5,286.2 1627.1,285.1 1628.6,279.4 1630.1,277.0 1631.6,278.5 1633.1,280.8 1634.6,278.3 1636.1,276.8 1637.6,283.5 1639.1,284.0 1640.6,279.2 1642.1,286.0 1643.6,280.5 1645.1,284.3 1646.6,286.6 1648.1,281.8 1649.6,278.5 1651.1,281.8 1652.7,284.1 1654.2,277.4 1655.7,286.5 1657.2,279.5 1658.7,284.0 1660.2,276.8 1661.7,286.4 1663.2,282.2 1664.7,284.6 1666.2,276.7 1667.7,284.5 1669.2,285.0 1670.7,286.6 1672.2,278.5 1673.7,276.5 1675.2,284.7 1676.7,282.3 1678.3,276.5 1679.8,282.5 1681.3,276.2 1682.8,286.2 1684.3,282.5 1685.8,273.9 1687.3,276.0 1688.8,284.7 1690.3,276.7" fill="none" stroke="#73bf69" stroke-width="1.0" stroke-linejoin="round"/></svg><div class="t" style="top:456.84px;font-size:12px;line-height:12px;color:#6e9fff;font-weight:700;right:204.00px;transform:scaleX(0.95);transform-origin:right center;">Last</div><div class="t" style="top:456.84px;font-size:12px;line-height:12px;color:#6e9fff;font-weight:700;right:148.50px;transform:scaleX(0.95);transform-origin:right center;">Min</div><div class="t" style="top:456.84px;font-size:12px;line-height:12px;color:#6e9fff;font-weight:700;right:92.50px;transform:scaleX(0.95);transform-origin:right center;">Mean</div><div class="t" style="top:456.84px;font-size:12px;line-height:12px;color:#6e9fff;font-weight:700;right:36.50px;transform:scaleX(0.95);transform-origin:right center;">Max</div><div style="position:absolute;left:1110px;top:475px;width:586px;height:1px;background:#212328;"></div><div style="position:absolute;left:1110px;top:498px;width:586px;height:1px;background:#212328;"></div><div style="position:absolute;left:1110px;top:522px;width:586px;height:1px;background:#212328;"></div><div style="position:absolute;left:1110px;top:546px;width:586px;height:1px;background:#212328;"></div><div style="position:absolute;left:1110px;top:570px;width:586px;height:1px;background:#212328;"></div><div style="position:absolute;left:1116px;top:485px;width:15px;height:4px;background:#73bf69;border-radius:1px;"></div><div class="t" style="top:480.84px;font-size:12px;line-height:12px;color:#ccccdc;left:1139.00px;transform:scaleX(0.99);transform-origin:left center;">Temperatur Raspi</div><div class="t" style="top:480.84px;font-size:12px;line-height:12px;color:#ccccdc;right:204.00px;transform:scaleX(0.97);transform-origin:right center;">27.3 °C</div><div class="t" style="top:480.84px;font-size:12px;line-height:12px;color:#ccccdc;right:148.50px;transform:scaleX(0.97);transform-origin:right center;">24.8 °C</div><div class="t" style="top:480.84px;font-size:12px;line-height:12px;color:#ccccdc;right:92.50px;transform:scaleX(0.97);transform-origin:right center;">27.9 °C</div><div class="t" style="top:480.84px;font-size:12px;line-height:12px;color:#ccccdc;right:36.50px;transform:scaleX(0.97);transform-origin:right center;">41.4 °C</div><div style="position:absolute;left:1116px;top:508px;width:15px;height:4px;background:#fade2a;border-radius:1px;"></div><div class="t" style="top:504.34px;font-size:12px;line-height:12px;color:#ccccdc;left:1139.00px;transform:scaleX(0.99);transform-origin:left center;">Temperatur BME280</div><div class="t" style="top:504.34px;font-size:12px;line-height:12px;color:#ccccdc;right:204.00px;transform:scaleX(0.97);transform-origin:right center;">11.1 °C</div><div class="t" style="top:504.34px;font-size:12px;line-height:12px;color:#ccccdc;right:148.50px;transform:scaleX(0.97);transform-origin:right center;">10.4 °C</div><div class="t" style="top:504.34px;font-size:12px;line-height:12px;color:#ccccdc;right:92.50px;transform:scaleX(0.97);transform-origin:right center;">10.8 °C</div><div class="t" style="top:504.34px;font-size:12px;line-height:12px;color:#ccccdc;right:36.50px;transform:scaleX(0.97);transform-origin:right center;">11.8 °C</div><div style="position:absolute;left:1116px;top:532px;width:15px;height:4px;background:#8ab8ff;border-radius:1px;"></div><div class="t" style="top:528.14px;font-size:12px;line-height:12px;color:#ccccdc;left:1139.00px;transform:scaleX(0.99);transform-origin:left center;">Temperatur DS18B20</div><div class="t" style="top:528.14px;font-size:12px;line-height:12px;color:#ccccdc;right:204.00px;transform:scaleX(0.97);transform-origin:right center;">5.31 °C</div><div class="t" style="top:528.14px;font-size:12px;line-height:12px;color:#ccccdc;right:148.50px;transform:scaleX(0.97);transform-origin:right center;">4.06 °C</div><div class="t" style="top:528.14px;font-size:12px;line-height:12px;color:#ccccdc;right:92.50px;transform:scaleX(0.97);transform-origin:right center;">4.65 °C</div><div class="t" style="top:528.14px;font-size:12px;line-height:12px;color:#ccccdc;right:36.50px;transform:scaleX(0.97);transform-origin:right center;">5.38 °C</div><div style="position:absolute;left:1116px;top:556px;width:15px;height:4px;background:#ff9830;border-radius:1px;"></div><div class="t" style="top:551.94px;font-size:12px;line-height:12px;color:#ccccdc;left:1139.00px;transform:scaleX(0.99);transform-origin:left center;">Tempertur Camera</div><div class="t" style="top:551.94px;font-size:12px;line-height:12px;color:#ccccdc;right:204.00px;transform:scaleX(0.97);transform-origin:right center;">13 °C</div><div class="t" style="top:551.94px;font-size:12px;line-height:12px;color:#ccccdc;right:148.50px;transform:scaleX(0.97);transform-origin:right center;">11 °C</div><div class="t" style="top:551.94px;font-size:12px;line-height:12px;color:#ccccdc;right:92.50px;transform:scaleX(0.97);transform-origin:right center;">13.0 °C</div><div class="t" style="top:551.94px;font-size:12px;line-height:12px;color:#ccccdc;right:36.50px;transform:scaleX(0.97);transform-origin:right center;">15 °C</div><div style="position:absolute;left:75px;top:360px;width:744px;height:220px;box-sizing:border-box;background:#181b1f;border:1px solid #26282d;border-radius:2px;"></div><svg style="position:absolute;left:0px;top:0px;pointer-events:none;" width="1727" height="1187" viewBox="0 0 1727 1187"><line x1="130" y1="527.9" x2="803" y2="527.9" stroke="#35383d" stroke-width="1"/><line x1="130" y1="497.9" x2="803" y2="497.9" stroke="#35383d" stroke-width="1"/><line x1="130" y1="467.9" x2="803" y2="467.9" stroke="#35383d" stroke-width="1"/><line x1="130" y1="437.9" x2="803" y2="437.9" stroke="#35383d" stroke-width="1"/><line x1="130" y1="407.9" x2="803" y2="407.9" stroke="#35383d" stroke-width="1"/><line x1="149.3" y1="377" x2="149.3" y2="528" stroke="#35383d" stroke-width="1"/><line x1="204.9" y1="377" x2="204.9" y2="528" stroke="#35383d" stroke-width="1"/><line x1="260.4" y1="377" x2="260.4" y2="528" stroke="#35383d" stroke-width="1"/><line x1="315.9" y1="377" x2="315.9" y2="528" stroke="#35383d" stroke-width="1"/><line x1="371.5" y1="377" x2="371.5" y2="528" stroke="#35383d" stroke-width="1"/><line x1="427.1" y1="377" x2="427.1" y2="528" stroke="#35383d" stroke-width="1"/><line x1="482.6" y1="377" x2="482.6" y2="528" stroke="#35383d" stroke-width="1"/><line x1="538.1" y1="377" x2="538.1" y2="528" stroke="#35383d" stroke-width="1"/><line x1="593.7" y1="377" x2="593.7" y2="528" stroke="#35383d" stroke-width="1"/><line x1="649.2" y1="377" x2="649.2" y2="528" stroke="#35383d" stroke-width="1"/><line x1="704.8" y1="377" x2="704.8" y2="528" stroke="#35383d" stroke-width="1"/><line x1="760.3" y1="377" x2="760.3" y2="528" stroke="#35383d" stroke-width="1"/><line x1="130" y1="377.5" x2="138" y2="377.5" stroke="#35383d" stroke-width="1"/><line x1="138" y1="377.5" x2="803" y2="377.5" stroke="#8fa58c" stroke-width="1"/></svg><div class="t" style="top:369.84px;font-size:12px;line-height:12px;color:#c4c5cf;right:1601.00px;transform:scaleX(0.955);transform-origin:right center;">ONLINE</div><div class="t" style="top:400.24px;font-size:12px;line-height:12px;color:#c4c5cf;right:1601.00px;">0.8</div><div class="t" style="top:430.24px;font-size:12px;line-height:12px;color:#c4c5cf;right:1601.00px;">0.6</div><div class="t" style="top:460.24px;font-size:12px;line-height:12px;color:#c4c5cf;right:1601.00px;">0.4</div><div class="t" style="top:490.24px;font-size:12px;line-height:12px;color:#c4c5cf;right:1601.00px;">0.2</div><div class="t" style="top:520.24px;font-size:12px;line-height:12px;color:#c4c5cf;right:1601.00px;">0</div><div class="t" style="top:534.84px;font-size:12px;line-height:12px;color:#c4c5cf;left:149.30px;transform:translateX(-50%);transform-origin:center center;">05:30</div><div class="t" style="top:534.84px;font-size:12px;line-height:12px;color:#c4c5cf;left:204.85px;transform:translateX(-50%);transform-origin:center center;">06:00</div><div class="t" style="top:534.84px;font-size:12px;line-height:12px;color:#c4c5cf;left:260.40px;transform:translateX(-50%);transform-origin:center center;">06:30</div><div class="t" style="top:534.84px;font-size:12px;line-height:12px;color:#c4c5cf;left:315.95px;transform:translateX(-50%);transform-origin:center center;">07:00</div><div class="t" style="top:534.84px;font-size:12px;line-height:12px;color:#c4c5cf;left:371.50px;transform:translateX(-50%);transform-origin:center center;">07:30</div><div class="t" style="top:534.84px;font-size:12px;line-height:12px;color:#c4c5cf;left:427.05px;transform:translateX(-50%);transform-origin:center center;">08:00</div><div class="t" style="top:534.84px;font-size:12px;line-height:12px;color:#c4c5cf;left:482.60px;transform:translateX(-50%);transform-origin:center center;">08:30</div><div class="t" style="top:534.84px;font-size:12px;line-height:12px;color:#c4c5cf;left:538.15px;transform:translateX(-50%);transform-origin:center center;">09:00</div><div class="t" style="top:534.84px;font-size:12px;line-height:12px;color:#c4c5cf;left:593.70px;transform:translateX(-50%);transform-origin:center center;">09:30</div><div class="t" style="top:534.84px;font-size:12px;line-height:12px;color:#c4c5cf;left:649.25px;transform:translateX(-50%);transform-origin:center center;">10:00</div><div class="t" style="top:534.84px;font-size:12px;line-height:12px;color:#c4c5cf;left:704.80px;transform:translateX(-50%);transform-origin:center center;">10:30</div><div class="t" style="top:534.84px;font-size:12px;line-height:12px;color:#c4c5cf;left:760.35px;transform:translateX(-50%);transform-origin:center center;">11:00</div><div style="position:absolute;left:88px;top:559px;width:14px;height:4px;background:#73bf69;border-radius:1px;"></div><div class="t" style="top:555.14px;font-size:12px;line-height:12px;color:#ccccdc;left:109.50px;transform:scaleX(1.0);transform-origin:left center;">online {host="host1", kamera="ASK001"}</div><div style="position:absolute;left:827px;top:360px;width:265px;height:220px;box-sizing:border-box;background:#181b1f;border:1px solid #26282d;border-radius:2px;"></div><div class="t" style="top:369.15px;font-size:14px;line-height:14px;color:#ccccdc;font-weight:700;left:959.50px;transform:translateX(-50%) scaleX(0.94);transform-origin:center center;">Temperatur RASPI</div><svg style="position:absolute;left:0px;top:0px;pointer-events:none;" width="1727" height="1187" viewBox="0 0 1727 1187"><path d="M898.07 524.52 A64.8 64.8 0 1 1 1021.33 524.52" fill="none" stroke="#22252b" stroke-width="17.5"/><path d="M898.07 524.52 A64.8 64.8 0 0 1 910.77 462.01" fill="none" stroke="#73bf69" stroke-width="17.5"/><path d="M886.47 528.29 A77.0 77.0 0 0 1 1012.41 448.37" fill="none" stroke="#73bf69" stroke-width="3"/><path d="M1012.41 448.37 A77.0 77.0 0 0 1 1029.37 471.71" fill="none" stroke="#e6b23c" stroke-width="3"/><path d="M1029.37 471.71 A77.0 77.0 0 0 1 1032.93 528.29" fill="none" stroke="#e8475b" stroke-width="3"/><text x="878.67" y="530.83" transform="rotate(252.0 878.67 530.83)" text-anchor="middle" dominant-baseline="central" font-family="Liberation Sans" font-size="11.5" fill="#ccccdc">0</text><text x="1018.02" y="442.39" transform="rotate(403.2 1018.02 442.39)" text-anchor="middle" dominant-baseline="central" font-family="Liberation Sans" font-size="11.5" fill="#ccccdc">70</text><text x="1036.79" y="468.22" transform="rotate(424.8 1036.79 468.22)" text-anchor="middle" dominant-baseline="central" font-family="Liberation Sans" font-size="11.5" fill="#ccccdc">80</text><text x="1040.73" y="530.83" transform="rotate(468.0 1040.73 530.83)" text-anchor="middle" dominant-baseline="central" font-family="Liberation Sans" font-size="11.5" fill="#ccccdc">100</text></svg><div class="t" style="top:498.62px;font-size:27.5px;line-height:27.5px;color:#73bf69;font-weight:700;left:960.00px;transform:translateX(-50%) scaleX(1.0);transform-origin:center center;">27.3 °C</div><div class="t" style="top:541.52px;font-size:19px;line-height:19px;color:#ccccdc;left:959.70px;transform:translateX(-50%) scaleX(1.04);transform-origin:center center;">Raspi Temp</div><div style="position:absolute;left:75px;top:588px;width:1017px;height:296px;box-sizing:border-box;background:#181b1f;border:1px solid #26282d;border-radius:2px;"></div><div class="t" style="top:597.95px;font-size:14px;line-height:14px;color:#ccccdc;font-weight:700;left:583.50px;transform:translateX(-50%) scaleX(0.95);transform-origin:center center;">KP Index</div><svg style="position:absolute;left:0px;top:0px;pointer-events:none;" width="1727" height="1187" viewBox="0 0 1727 1187"><rect x="110" y="637" width="965" height="184" fill="#26322a"/><line x1="110" y1="637.5" x2="1075" y2="637.5" stroke="#2d3a30" stroke-width="1"/><line x1="110" y1="773.1" x2="1075" y2="773.1" stroke="#3a4a3d" stroke-width="1"/><line x1="110" y1="725.0" x2="1075" y2="725.0" stroke="#3a4a3d" stroke-width="1"/><line x1="110" y1="677.0" x2="1075" y2="677.0" stroke="#3a4a3d" stroke-width="1"/><rect x="110.50" y="660.11" width="39.00" height="160.49" fill="#66a65e"/><line x1="149.00" y1="660.11" x2="149.00" y2="820.6" stroke="#7cc472" stroke-width="0.8"/><rect x="150.70" y="660.11" width="39.00" height="160.49" fill="#66a65e"/><line x1="189.20" y1="660.11" x2="189.20" y2="820.6" stroke="#7cc472" stroke-width="0.8"/><rect x="190.90" y="660.11" width="39.00" height="160.49" fill="#66a65e"/><line x1="229.40" y1="660.11" x2="229.40" y2="820.6" stroke="#7cc472" stroke-width="0.8"/><rect x="231.10" y="660.11" width="39.00" height="160.49" fill="#66a65e"/><line x1="269.60" y1="660.11" x2="269.60" y2="820.6" stroke="#7cc472" stroke-width="0.8"/><rect x="271.30" y="660.11" width="39.00" height="160.49" fill="#66a65e"/><line x1="309.80" y1="660.11" x2="309.80" y2="820.6" stroke="#7cc472" stroke-width="0.8"/><rect x="311.50" y="660.11" width="39.00" height="160.49" fill="#66a65e"/><line x1="350.00" y1="660.11" x2="350.00" y2="820.6" stroke="#7cc472" stroke-width="0.8"/><rect x="351.70" y="660.11" width="39.00" height="160.49" fill="#66a65e"/><line x1="390.20" y1="660.11" x2="390.20" y2="820.6" stroke="#7cc472" stroke-width="0.8"/><rect x="391.90" y="660.11" width="39.00" height="160.49" fill="#66a65e"/><line x1="430.40" y1="660.11" x2="430.40" y2="820.6" stroke="#7cc472" stroke-width="0.8"/><rect x="432.10" y="660.11" width="39.00" height="160.49" fill="#66a65e"/><line x1="470.60" y1="660.11" x2="470.60" y2="820.6" stroke="#7cc472" stroke-width="0.8"/><rect x="472.30" y="818.6" width="39.00" height="2" fill="#3f5f3c"/><rect x="512.50" y="788.60" width="39.00" height="32.00" fill="#66a65e"/><line x1="551.00" y1="788.60" x2="551.00" y2="820.6" stroke="#7cc472" stroke-width="0.8"/><rect x="552.70" y="788.60" width="39.00" height="32.00" fill="#66a65e"/><line x1="591.20" y1="788.60" x2="591.20" y2="820.6" stroke="#7cc472" stroke-width="0.8"/><rect x="592.90" y="788.60" width="39.00" height="32.00" fill="#66a65e"/><line x1="631.40" y1="788.60" x2="631.40" y2="820.6" stroke="#7cc472" stroke-width="0.8"/><rect x="633.10" y="788.60" width="39.00" height="32.00" fill="#66a65e"/><line x1="671.60" y1="788.60" x2="671.60" y2="820.6" stroke="#7cc472" stroke-width="0.8"/><rect x="673.30" y="788.60" width="39.00" height="32.00" fill="#66a65e"/><line x1="711.80" y1="788.60" x2="711.80" y2="820.6" stroke="#7cc472" stroke-width="0.8"/><rect x="713.50" y="788.60" width="39.00" height="32.00" fill="#66a65e"/><line x1="752.00" y1="788.60" x2="752.00" y2="820.6" stroke="#7cc472" stroke-width="0.8"/><rect x="753.70" y="788.60" width="39.00" height="32.00" fill="#66a65e"/><line x1="792.20" y1="788.60" x2="792.20" y2="820.6" stroke="#7cc472" stroke-width="0.8"/><rect x="793.90" y="788.60" width="39.00" height="32.00" fill="#66a65e"/><line x1="832.40" y1="788.60" x2="832.40" y2="820.6" stroke="#7cc472" stroke-width="0.8"/><rect x="834.10" y="788.60" width="39.00" height="32.00" fill="#66a65e"/><line x1="872.60" y1="788.60" x2="872.60" y2="820.6" stroke="#7cc472" stroke-width="0.8"/><rect x="874.30" y="756.50" width="39.00" height="64.10" fill="#66a65e"/><line x1="912.80" y1="756.50" x2="912.80" y2="820.6" stroke="#7cc472" stroke-width="0.8"/><rect x="914.50" y="788.60" width="39.00" height="32.00" fill="#66a65e"/><line x1="953.00" y1="788.60" x2="953.00" y2="820.6" stroke="#7cc472" stroke-width="0.8"/><rect x="954.70" y="788.60" width="39.00" height="32.00" fill="#66a65e"/><line x1="993.20" y1="788.60" x2="993.20" y2="820.6" stroke="#7cc472" stroke-width="0.8"/><rect x="994.90" y="818.6" width="39.00" height="2" fill="#3f5f3c"/><rect x="1035.10" y="788.60" width="39.00" height="32.00" fill="#66a65e"/><line x1="1073.60" y1="788.60" x2="1073.60" y2="820.6" stroke="#7cc472" stroke-width="0.8"/></svg><div class="t" style="top:648.65px;font-size:10px;line-height:10px;color:#ccccdc;font-weight:700;left:130.00px;transform:translateX(-50%) scaleX(0.99);transform-origin:center center;">1.67</div><div class="t" style="top:834.64px;font-size:12px;line-height:12px;color:#c4c5cf;left:130.00px;transform:translateX(-50%);transform-origin:center center;">05:30</div><div class="t" style="top:648.65px;font-size:10px;line-height:10px;color:#ccccdc;font-weight:700;left:170.20px;transform:translateX(-50%) scaleX(0.99);transform-origin:center center;">1.67</div><div class="t" style="top:834.64px;font-size:12px;line-height:12px;color:#c4c5cf;left:170.20px;transform:translateX(-50%);transform-origin:center center;">05:45</div><div class="t" style="top:648.65px;font-size:10px;line-height:10px;color:#ccccdc;font-weight:700;left:210.40px;transform:translateX(-50%) scaleX(0.99);transform-origin:center center;">1.67</div><div class="t" style="top:834.64px;font-size:12px;line-height:12px;color:#c4c5cf;left:210.40px;transform:translateX(-50%);transform-origin:center center;">06:00</div><div class="t" style="top:648.65px;font-size:10px;line-height:10px;color:#ccccdc;font-weight:700;left:250.60px;transform:translateX(-50%) scaleX(0.99);transform-origin:center center;">1.67</div><div class="t" style="top:834.64px;font-size:12px;line-height:12px;color:#c4c5cf;left:250.60px;transform:translateX(-50%);transform-origin:center center;">06:15</div><div class="t" style="top:648.65px;font-size:10px;line-height:10px;color:#ccccdc;font-weight:700;left:290.80px;transform:translateX(-50%) scaleX(0.99);transform-origin:center center;">1.67</div><div class="t" style="top:834.64px;font-size:12px;line-height:12px;color:#c4c5cf;left:290.80px;transform:translateX(-50%);transform-origin:center center;">06:30</div><div class="t" style="top:648.65px;font-size:10px;line-height:10px;color:#ccccdc;font-weight:700;left:331.00px;transform:translateX(-50%) scaleX(0.99);transform-origin:center center;">1.67</div><div class="t" style="top:834.64px;font-size:12px;line-height:12px;color:#c4c5cf;left:331.00px;transform:translateX(-50%);transform-origin:center center;">06:45</div><div class="t" style="top:648.65px;font-size:10px;line-height:10px;color:#ccccdc;font-weight:700;left:371.20px;transform:translateX(-50%) scaleX(0.99);transform-origin:center center;">1.67</div><div class="t" style="top:834.64px;font-size:12px;line-height:12px;color:#c4c5cf;left:371.20px;transform:translateX(-50%);transform-origin:center center;">07:00</div><div class="t" style="top:648.65px;font-size:10px;line-height:10px;color:#ccccdc;font-weight:700;left:411.40px;transform:translateX(-50%) scaleX(0.99);transform-origin:center center;">1.67</div><div class="t" style="top:834.64px;font-size:12px;line-height:12px;color:#c4c5cf;left:411.40px;transform:translateX(-50%);transform-origin:center center;">07:15</div><div class="t" style="top:648.65px;font-size:10px;line-height:10px;color:#ccccdc;font-weight:700;left:451.60px;transform:translateX(-50%) scaleX(0.99);transform-origin:center center;">1.67</div><div class="t" style="top:834.64px;font-size:12px;line-height:12px;color:#c4c5cf;left:451.60px;transform:translateX(-50%);transform-origin:center center;">07:30</div><div class="t" style="top:810.03px;font-size:10px;line-height:10px;color:#ccccdc;font-weight:700;left:491.80px;transform:translateX(-50%) scaleX(0.99);transform-origin:center center;">0</div><div class="t" style="top:834.64px;font-size:12px;line-height:12px;color:#c4c5cf;left:491.80px;transform:translateX(-50%);transform-origin:center center;">07:45</div><div class="t" style="top:777.13px;font-size:10px;line-height:10px;color:#ccccdc;font-weight:700;left:532.00px;transform:translateX(-50%) scaleX(0.99);transform-origin:center center;">0.333</div><div class="t" style="top:834.64px;font-size:12px;line-height:12px;color:#c4c5cf;left:532.00px;transform:translateX(-50%);transform-origin:center center;">08:00</div><div class="t" style="top:777.13px;font-size:10px;line-height:10px;color:#ccccdc;font-weight:700;left:572.20px;transform:translateX(-50%) scaleX(0.99);transform-origin:center center;">0.333</div><div class="t" style="top:834.64px;font-size:12px;line-height:12px;color:#c4c5cf;left:572.20px;transform:translateX(-50%);transform-origin:center center;">08:15</div><div class="t" style="top:777.13px;font-size:10px;line-height:10px;color:#ccccdc;font-weight:700;left:612.40px;transform:translateX(-50%) scaleX(0.99);transform-origin:center center;">0.333</div><div class="t" style="top:834.64px;font-size:12px;line-height:12px;color:#c4c5cf;left:612.40px;transform:translateX(-50%);transform-origin:center center;">08:30</div><div class="t" style="top:777.13px;font-size:10px;line-height:10px;color:#ccccdc;font-weight:700;left:652.60px;transform:translateX(-50%) scaleX(0.99);transform-origin:center center;">0.333</div><div class="t" style="top:834.64px;font-size:12px;line-height:12px;color:#c4c5cf;left:652.60px;transform:translateX(-50%);transform-origin:center center;">08:45</div><div class="t" style="top:777.13px;font-size:10px;line-height:10px;color:#ccccdc;font-weight:700;left:692.80px;transform:translateX(-50%) scaleX(0.99);transform-origin:center center;">0.333</div><div class="t" style="top:834.64px;font-size:12px;line-height:12px;color:#c4c5cf;left:692.80px;transform:translateX(-50%);transform-origin:center center;">09:00</div><div class="t" style="top:777.13px;font-size:10px;line-height:10px;color:#ccccdc;font-weight:700;left:733.00px;transform:translateX(-50%) scaleX(0.99);transform-origin:center center;">0.333</div><div class="t" style="top:834.64px;font-size:12px;line-height:12px;color:#c4c5cf;left:733.00px;transform:translateX(-50%);transform-origin:center center;">09:15</div><div class="t" style="top:777.13px;font-size:10px;line-height:10px;color:#ccccdc;font-weight:700;left:773.20px;transform:translateX(-50%) scaleX(0.99);transform-origin:center center;">0.333</div><div class="t" style="top:834.64px;font-size:12px;line-height:12px;color:#c4c5cf;left:773.20px;transform:translateX(-50%);transform-origin:center center;">09:30</div><div class="t" style="top:777.13px;font-size:10px;line-height:10px;color:#ccccdc;font-weight:700;left:813.40px;transform:translateX(-50%) scaleX(0.99);transform-origin:center center;">0.333</div><div class="t" style="top:834.64px;font-size:12px;line-height:12px;color:#c4c5cf;left:813.40px;transform:translateX(-50%);transform-origin:center center;">09:45</div><div class="t" style="top:777.13px;font-size:10px;line-height:10px;color:#ccccdc;font-weight:700;left:853.60px;transform:translateX(-50%) scaleX(0.99);transform-origin:center center;">0.333</div><div class="t" style="top:834.64px;font-size:12px;line-height:12px;color:#c4c5cf;left:853.60px;transform:translateX(-50%);transform-origin:center center;">10:00</div><div class="t" style="top:745.04px;font-size:10px;line-height:10px;color:#ccccdc;font-weight:700;left:893.80px;transform:translateX(-50%) scaleX(0.99);transform-origin:center center;">0.667</div><div class="t" style="top:834.64px;font-size:12px;line-height:12px;color:#c4c5cf;left:893.80px;transform:translateX(-50%);transform-origin:center center;">10:15</div><div class="t" style="top:777.13px;font-size:10px;line-height:10px;color:#ccccdc;font-weight:700;left:934.00px;transform:translateX(-50%) scaleX(0.99);transform-origin:center center;">0.333</div><div class="t" style="top:834.64px;font-size:12px;line-height:12px;color:#c4c5cf;left:934.00px;transform:translateX(-50%);transform-origin:center center;">10:30</div><div class="t" style="top:777.13px;font-size:10px;line-height:10px;color:#ccccdc;font-weight:700;left:974.20px;transform:translateX(-50%) scaleX(0.99);transform-origin:center center;">0.333</div><div class="t" style="top:834.64px;font-size:12px;line-height:12px;color:#c4c5cf;left:974.20px;transform:translateX(-50%);transform-origin:center center;">10:45</div><div class="t" style="top:810.03px;font-size:10px;line-height:10px;color:#ccccdc;font-weight:700;left:1014.40px;transform:translateX(-50%) scaleX(0.99);transform-origin:center center;">0</div><div class="t" style="top:834.64px;font-size:12px;line-height:12px;color:#c4c5cf;left:1014.40px;transform:translateX(-50%);transform-origin:center center;">11:00</div><div class="t" style="top:777.13px;font-size:10px;line-height:10px;color:#ccccdc;font-weight:700;left:1054.60px;transform:translateX(-50%) scaleX(0.99);transform-origin:center center;">0.333</div><div class="t" style="top:834.64px;font-size:12px;line-height:12px;color:#c4c5cf;left:1054.60px;transform:translateX(-50%);transform-origin:center center;">11:15</div><div class="t" style="top:669.49px;font-size:12px;line-height:12px;color:#c4c5cf;right:1626.00px;">1.5</div><div class="t" style="top:717.54px;font-size:12px;line-height:12px;color:#c4c5cf;right:1626.00px;">1</div><div class="t" style="top:765.59px;font-size:12px;line-height:12px;color:#c4c5cf;right:1626.00px;">0.5</div><div class="t" style="top:813.64px;font-size:12px;line-height:12px;color:#c4c5cf;right:1626.00px;">0</div><div style="position:absolute;left:88px;top:864px;width:14px;height:4px;background:#73bf69;border-radius:1px;"></div><div class="t" style="top:859.44px;font-size:12px;line-height:12px;color:#ccccdc;left:109.80px;">KP-Index</div><div style="position:absolute;left:1100px;top:588px;width:607px;height:296px;box-sizing:border-box;background:#181b1f;border:1px solid #26282d;border-radius:2px;"></div><div class="t" style="top:597.95px;font-size:14px;line-height:14px;color:#ccccdc;font-weight:700;left:1403.50px;transform:translateX(-50%) scaleX(0.95);transform-origin:center center;">Außentemp. - Innentemp.</div><svg style="position:absolute;left:0px;top:0px;pointer-events:none;" width="1727" height="1187" viewBox="0 0 1727 1187"><line x1="1141" y1="773.7" x2="1690" y2="773.7" stroke="#35383d" stroke-width="1"/><line x1="1141" y1="726.0" x2="1690" y2="726.0" stroke="#35383d" stroke-width="1"/><line x1="1141" y1="678.3" x2="1690" y2="678.3" stroke="#35383d" stroke-width="1"/><rect x="1141" y="655" width="550" height="166.4" fill="#142015" opacity="0"/><path d="M1142 661.0H1144V821.4H1142ZM1145 662.8H1147V821.4H1145ZM1148 662.4H1150V821.4H1148ZM1151 662.9H1153V821.4H1151ZM1154 663.0H1156V821.4H1154ZM1157 661.7H1159V821.4H1157ZM1160 661.5H1162V821.4H1160ZM1163 663.5H1165V821.4H1163ZM1166 662.1H1168V821.4H1166ZM1169 665.5H1171V821.4H1169ZM1172 668.7H1174V821.4H1172ZM1175 667.3H1177V821.4H1175ZM1178 668.0H1180V821.4H1178ZM1181 667.0H1183V821.4H1181ZM1184 667.0H1186V821.4H1184ZM1187 664.9H1189V821.4H1187ZM1190 665.2H1192V821.4H1190ZM1193 664.8H1195V821.4H1193ZM1196 663.1H1198V821.4H1196ZM1199 662.7H1201V821.4H1199ZM1202 661.6H1204V821.4H1202ZM1205 660.4H1207V821.4H1205ZM1208 662.6H1210V821.4H1208ZM1211 662.7H1213V821.4H1211ZM1214 662.6H1216V821.4H1214ZM1217 662.3H1219V821.4H1217ZM1220 664.3H1222V821.4H1220ZM1223 663.3H1225V821.4H1223ZM1226 663.9H1228V821.4H1226ZM1229 664.3H1231V821.4H1229ZM1232 663.9H1234V821.4H1232ZM1235 664.4H1237V821.4H1235ZM1238 663.1H1240V821.4H1238ZM1241 664.5H1243V821.4H1241ZM1244 664.1H1246V821.4H1244ZM1247 665.3H1249V821.4H1247ZM1250 665.2H1252V821.4H1250ZM1253 663.3H1255V821.4H1253ZM1256 663.4H1258V821.4H1256ZM1259 664.1H1261V821.4H1259ZM1262 666.9H1264V821.4H1262ZM1265 666.5H1267V821.4H1265ZM1268 667.3H1270V821.4H1268ZM1271 666.8H1273V821.4H1271ZM1274 667.6H1276V821.4H1274ZM1277 667.6H1279V821.4H1277ZM1281 667.9H1283V821.4H1281ZM1284 668.7H1286V821.4H1284ZM1287 669.0H1289V821.4H1287ZM1290 670.1H1292V821.4H1290ZM1293 669.6H1295V821.4H1293ZM1296 669.8H1298V821.4H1296ZM1299 669.3H1301V821.4H1299ZM1302 669.3H1304V821.4H1302ZM1305 668.1H1307V821.4H1305ZM1308 666.6H1310V821.4H1308ZM1311 667.9H1313V821.4H1311ZM1314 668.4H1316V821.4H1314ZM1317 668.7H1319V821.4H1317ZM1320 668.2H1322V821.4H1320ZM1323 668.9H1325V821.4H1323ZM1326 668.1H1328V821.4H1326ZM1329 669.9H1331V821.4H1329ZM1332 669.0H1334V821.4H1332ZM1335 667.6H1337V821.4H1335ZM1338 666.3H1340V821.4H1338ZM1341 667.4H1343V821.4H1341ZM1344 666.6H1346V821.4H1344ZM1347 661.9H1349V821.4H1347ZM1350 661.2H1352V821.4H1350ZM1353 657.8H1355V821.4H1353ZM1356 653.3H1358V821.4H1356ZM1359 649.7H1361V821.4H1359ZM1362 646.9H1364V821.4H1362ZM1365 645.2H1367V821.4H1365ZM1368 642.5H1370V821.4H1368ZM1371 643.2H1373V821.4H1371ZM1374 641.9H1376V821.4H1374ZM1377 645.5H1379V821.4H1377ZM1380 646.5H1382V821.4H1380ZM1383 649.8H1385V821.4H1383ZM1386 652.8H1388V821.4H1386ZM1389 654.5H1391V821.4H1389ZM1392 658.4H1394V821.4H1392ZM1395 659.5H1397V821.4H1395ZM1398 661.1H1400V821.4H1398ZM1401 664.0H1403V821.4H1401ZM1404 664.4H1406V821.4H1404ZM1407 666.4H1409V821.4H1407ZM1410 668.6H1412V821.4H1410ZM1413 670.8H1415V821.4H1413ZM1416 671.5H1418V821.4H1416ZM1419 673.0H1421V821.4H1419ZM1422 676.7H1424V821.4H1422ZM1425 677.0H1427V821.4H1425ZM1428 680.3H1430V821.4H1428ZM1431 681.0H1433V821.4H1431ZM1434 680.2H1436V821.4H1434ZM1437 680.9H1439V821.4H1437ZM1440 681.5H1442V821.4H1440ZM1443 682.3H1445V821.4H1443ZM1446 683.0H1448V821.4H1446ZM1449 684.1H1451V821.4H1449ZM1452 685.4H1454V821.4H1452ZM1455 687.4H1457V821.4H1455ZM1458 686.4H1460V821.4H1458ZM1461 686.4H1463V821.4H1461ZM1464 687.2H1466V821.4H1464ZM1467 686.2H1469V821.4H1467ZM1470 686.4H1472V821.4H1470ZM1473 688.2H1475V821.4H1473ZM1476 687.2H1478V821.4H1476ZM1479 687.5H1481V821.4H1479ZM1482 686.6H1484V821.4H1482ZM1485 687.8H1487V821.4H1485ZM1488 688.5H1490V821.4H1488ZM1491 687.5H1493V821.4H1491ZM1494 689.2H1496V821.4H1494ZM1497 689.1H1499V821.4H1497ZM1500 687.7H1502V821.4H1500ZM1503 689.0H1505V821.4H1503ZM1506 688.5H1508V821.4H1506ZM1509 689.0H1511V821.4H1509ZM1512 688.1H1514V821.4H1512ZM1515 688.9H1517V821.4H1515ZM1518 688.9H1520V821.4H1518ZM1521 687.2H1523V821.4H1521ZM1524 687.2H1526V821.4H1524ZM1527 689.4H1529V821.4H1527ZM1530 691.6H1532V821.4H1530ZM1533 689.7H1535V821.4H1533ZM1536 690.1H1538V821.4H1536ZM1539 690.3H1541V821.4H1539ZM1542 689.5H1544V821.4H1542ZM1545 689.7H1547V821.4H1545ZM1548 689.7H1550V821.4H1548ZM1551 689.9H1553V821.4H1551ZM1555 690.6H1557V821.4H1555ZM1558 690.0H1560V821.4H1558ZM1561 690.1H1563V821.4H1561ZM1564 690.8H1566V821.4H1564ZM1567 688.7H1569V821.4H1567ZM1570 689.7H1572V821.4H1570ZM1573 689.9H1575V821.4H1573ZM1576 688.6H1578V821.4H1576ZM1579 688.1H1581V821.4H1579ZM1582 689.2H1584V821.4H1582ZM1585 687.6H1587V821.4H1585ZM1588 687.3H1590V821.4H1588ZM1591 687.8H1593V821.4H1591ZM1594 688.3H1596V821.4H1594ZM1597 686.7H1599V821.4H1597ZM1600 687.1H1602V821.4H1600ZM1603 687.0H1605V821.4H1603ZM1606 688.1H1608V821.4H1606ZM1609 687.2H1611V821.4H1609ZM1612 688.6H1614V821.4H1612ZM1615 687.5H1617V821.4H1615ZM1618 688.4H1620V821.4H1618ZM1621 689.6H1623V821.4H1621ZM1624 690.6H1626V821.4H1624ZM1627 689.1H1629V821.4H1627ZM1630 687.5H1632V821.4H1630ZM1633 686.1H1635V821.4H1633ZM1636 686.0H1638V821.4H1636ZM1639 684.1H1641V821.4H1639ZM1642 684.7H1644V821.4H1642ZM1645 684.6H1647V821.4H1645ZM1648 682.8H1650V821.4H1648ZM1651 682.9H1653V821.4H1651ZM1654 683.9H1656V821.4H1654ZM1657 683.3H1659V821.4H1657ZM1660 683.2H1662V821.4H1660ZM1663 681.6H1665V821.4H1663ZM1666 680.5H1668V821.4H1666ZM1669 680.4H1671V821.4H1669ZM1672 681.5H1674V821.4H1672ZM1675 680.3H1677V821.4H1675ZM1678 680.6H1680V821.4H1678ZM1681 680.9H1683V821.4H1681ZM1684 681.0H1686V821.4H1684ZM1687 681.1H1689V821.4H1687Z" fill="#73bf69"/></svg><div class="t" style="top:813.74px;font-size:12px;line-height:12px;color:#c4c5cf;right:595.00px;transform:scaleX(0.97);transform-origin:right center;">0 °C</div><div class="t" style="top:766.04px;font-size:12px;line-height:12px;color:#c4c5cf;right:595.00px;transform:scaleX(0.97);transform-origin:right center;">2 °C</div><div class="t" style="top:718.34px;font-size:12px;line-height:12px;color:#c4c5cf;right:595.00px;transform:scaleX(0.97);transform-origin:right center;">4 °C</div><div class="t" style="top:670.64px;font-size:12px;line-height:12px;color:#c4c5cf;right:595.00px;transform:scaleX(0.97);transform-origin:right center;">6 °C</div><div style="position:absolute;left:1118.5px;top:836px;width:580px;height:9px;background:#d2d3e0;border-radius:4.5px;"></div><div style="position:absolute;left:1121px;top:837.5px;width:1.2px;height:6px;background:#6f7079;"></div><div style="position:absolute;left:1113px;top:863px;width:14px;height:4px;background:#73bf69;border-radius:1px;"></div><div class="t" style="top:859.14px;font-size:12px;line-height:12px;color:#ccccdc;left:1135.00px;transform:scaleX(1.01);transform-origin:left center;">Temperatur Raspi</div><div style="position:absolute;left:75px;top:892px;width:1632px;height:320px;box-sizing:border-box;background:#181b1f;border:1px solid #26282d;border-radius:2px;"></div><div class="t" style="top:901.95px;font-size:14px;line-height:14px;color:#ccccdc;font-weight:700;left:890.50px;transform:translateX(-50%) scaleX(0.95);transform-origin:center center;">Uploadstatus (Image)</div><svg style="position:absolute;left:0px;top:0px;pointer-events:none;" width="1727" height="1187" viewBox="0 0 1727 1187"><line x1="96" y1="965.5" x2="1690" y2="965.5" stroke="#35383d" stroke-width="1"/><line x1="96" y1="1013.5" x2="1690" y2="1013.5" stroke="#35383d" stroke-width="1"/><line x1="96" y1="1061.5" x2="1690" y2="1061.5" stroke="#35383d" stroke-width="1"/><path d="M101.5 1037V1061.5M110.5 1037V1061.5M118.5 1037V1061.5M127.5 1037V1061.5M136.5 1037V1061.5M144.5 1037V1061.5M153.5 1037V1061.5M162.5 1037V1061.5M170.5 1037V1061.5M179.5 1037V1061.5M188.5 1037V1061.5M197.5 1037V1061.5M205.5 1037V1061.5M214.5 1037V1061.5M223.5 1037V1061.5M231.5 1037V1061.5M240.5 1037V1061.5M249.5 1037V1061.5M257.5 1037V1061.5M266.5 1037V1061.5M275.5 1037V1061.5M284.5 1037V1061.5M292.5 1037V1061.5M301.5 1037V1061.5M310.5 1037V1061.5M318.5 1037V1061.5M327.5 1037V1061.5M336.5 1037V1061.5M344.5 1037V1061.5M353.5 1037V1061.5M362.5 1037V1061.5M371.5 1037V1061.5M379.5 1037V1061.5M388.5 1037V1061.5M397.5 1037V1061.5M405.5 1037V1061.5M414.5 1037V1061.5M423.5 1037V1061.5M431.5 1037V1061.5M440.5 1037V1061.5M449.5 1037V1061.5M458.5 1037V1061.5M466.5 1037V1061.5M475.5 1037V1061.5M484.5 1037V1061.5M492.5 1037V1061.5M501.5 1037V1061.5M510.5 1037V1061.5M518.5 1037V1061.5M527.5 1037V1061.5M536.5 1037V1061.5M545.5 1037V1061.5M553.5 1037V1061.5M562.5 1037V1061.5M571.5 1037V1061.5M579.5 1037V1061.5M588.5 1037V1061.5M597.5 1037V1061.5M605.5 1037V1061.5M614.5 1037V1061.5M623.5 1037V1061.5M632.5 1037V1061.5M640.5 1037V1061.5M649.5 1037V1061.5M658.5 1037V1061.5M666.5 1037V1061.5M675.5 1037V1061.5M684.5 1037V1061.5M692.5 1037V1061.5M701.5 1037V1061.5M710.5 1037V1061.5M719.5 1037V1061.5M727.5 1037V1061.5M736.5 1037V1061.5M745.5 1037V1061.5M753.5 1037V1061.5M762.5 1037V1061.5M771.5 1037V1061.5M779.5 1037V1061.5M788.5 1037V1061.5M797.5 1037V1061.5M806.5 1037V1061.5M814.5 1037V1061.5M823.5 1037V1061.5M832.5 1037V1061.5M840.5 1037V1061.5M849.5 1037V1061.5M858.5 1037V1061.5M866.5 1037V1061.5M875.5 1037V1061.5M884.5 1037V1061.5M893.5 1037V1061.5M901.5 1037V1061.5M910.5 1037V1061.5M919.5 1037V1061.5M927.5 1037V1061.5M936.5 1037V1061.5M945.5 1037V1061.5M953.5 1037V1061.5M1023.5 1037V1061.5M1032.5 1037V1061.5M1040.5 1037V1061.5M1049.5 1037V1061.5M1058.5 1037V1061.5M1067.5 1037V1061.5M1075.5 1037V1061.5M1084.5 1037V1061.5M1093.5 1037V1061.5M1101.5 1037V1061.5M1110.5 1037V1061.5M1119.5 1037V1061.5M1127.5 1037V1061.5M1136.5 1037V1061.5M1145.5 1037V1061.5M1154.5 1037V1061.5M1162.5 1037V1061.5M1171.5 1037V1061.5M1180.5 1037V1061.5M1188.5 1037V1061.5M1197.5 1037V1061.5M1206.5 1037V1061.5M1214.5 1037V1061.5M1223.5 1037V1061.5M1232.5 1037V1061.5M1241.5 1037V1061.5M1249.5 1037V1061.5M1258.5 1037V1061.5M1267.5 1037V1061.5M1275.5 1037V1061.5M1284.5 1037V1061.5M1293.5 1037V1061.5M1301.5 1037V1061.5M1310.5 1037V1061.5M1319.5 1037V1061.5M1328.5 1037V1061.5M1336.5 1037V1061.5M1345.5 1037V1061.5M1354.5 1037V1061.5M1362.5 1037V1061.5M1371.5 1037V1061.5M1380.5 1037V1061.5M1388.5 1037V1061.5M1397.5 1037V1061.5M1406.5 1037V1061.5M1415.5 1037V1061.5M1423.5 1037V1061.5M1432.5 1037V1061.5M1441.5 1037V1061.5M1449.5 1037V1061.5M1458.5 1037V1061.5M1467.5 1037V1061.5M1475.5 1037V1061.5M1484.5 1037V1061.5M1493.5 1037V1061.5M1502.5 1037V1061.5M1510.5 1037V1061.5M1519.5 1037V1061.5M1528.5 1037V1061.5M1536.5 1037V1061.5M1545.5 1037V1061.5M1554.5 1037V1061.5M1562.5 1037V1061.5M1571.5 1037V1061.5M1580.5 1037V1061.5M1589.5 1037V1061.5M1597.5 1037V1061.5M1606.5 1037V1061.5M1615.5 1037V1061.5M1623.5 1037V1061.5M1632.5 1037V1061.5M1641.5 1037V1061.5M1649.5 1037V1061.5M1658.5 1037V1061.5M1667.5 1037V1061.5M1676.5 1037V1061.5M1684.5 1037V1061.5M945.5 1037V1061.5M953.5 1037V1061.5M971.5 1037V1061.5M979.5 1037V1061.5M997.5 1037V1061.5M1014.5 1037V1061.5" stroke="#a2dc98" stroke-width="1" fill="none"/><path d="M967.5 1037V1061.5" stroke="#e8475b" stroke-width="1.2" fill="none"/><path d="M991.5 1037V1061.5" stroke="#8ab8ff" stroke-width="1.2" fill="none"/><path d="M1007.5 1037V1061.5" stroke="#fade2a" stroke-width="1.2" fill="none"/><path d="M1009.5 1037V1061.5" stroke="#ff9830" stroke-width="1.2" fill="none"/></svg><div class="t" style="top:958.04px;font-size:12px;line-height:12px;color:#c4c5cf;right:1636.00px;">4</div><div class="t" style="top:1006.04px;font-size:12px;line-height:12px;color:#c4c5cf;right:1636.00px;">2</div><div class="t" style="top:1054.04px;font-size:12px;line-height:12px;color:#c4c5cf;right:1636.00px;">0</div><div class="t" style="left:86.4px;top:1074.8px;font-size:12px;line-height:12px;font-weight:700;color:#d8d9e2">05:31</div><div class="t" style="left:95.1px;top:1074.8px;font-size:12px;line-height:12px;font-weight:700;color:#d8d9e2">05:33</div><div class="t" style="left:103.8px;top:1074.8px;font-size:12px;line-height:12px;font-weight:700;color:#d8d9e2">05:35</div><div class="t" style="left:112.5px;top:1074.8px;font-size:12px;line-height:12px;font-weight:700;color:#d8d9e2">05:37</div><div class="t" style="left:121.2px;top:1074.8px;font-size:12px;line-height:12px;font-weight:700;color:#d8d9e2">05:39</div><div class="t" style="left:129.9px;top:1074.8px;font-size:12px;line-height:12px;font-weight:700;color:#d8d9e2">05:41</div><div class="t" style="left:138.6px;top:1074.8px;font-size:12px;line-height:12px;font-weight:700;color:#d8d9e2">05:43</div><div class="t" style="left:147.3px;top:1074.8px;font-size:12px;line-height:12px;font-weight:700;color:#d8d9e2">05:45</div><div class="t" style="left:156.0px;top:1074.8px;font-size:12px;line-height:12px;font-weight:700;color:#d8d9e2">05:47</div><div class="t" style="left:164.7px;top:1074.8px;font-size:12px;line-height:12px;font-weight:700;color:#d8d9e2">05:49</div><div class="t" style="left:173.4px;top:1074.8px;font-size:12px;line-height:12px;font-weight:700;color:#d8d9e2">05:51</div><div class="t" style="left:182.1px;top:1074.8px;font-size:12px;line-height:12px;font-weight:700;color:#d8d9e2">05:53</div><div class="t" style="left:190.8px;top:1074.8px;font-size:12px;line-height:12px;font-weight:700;color:#d8d9e2">05:55</div><div class="t" style="left:199.5px;top:1074.8px;font-size:12px;line-height:12px;font-weight:700;color:#d8d9e2">05:57</div><div class="t" style="left:208.2px;top:1074.8px;font-size:12px;line-height:12px;font-weight:700;color:#d8d9e2">05:59</div><div class="t" style="left:216.9px;top:1074.8px;font-size:12px;line-height:12px;font-weight:700;color:#d8d9e2">05:01</div><div class="t" style="left:225.6px;top:1074.8px;font-size:12px;line-height:12px;font-weight:700;color:#d8d9e2">05:03</div><div class="t" style="left:234.3px;top:1074.8px;font-size:12px;line-height:12px;font-weight:700;color:#d8d9e2">05:05</div><div class="t" style="left:243.0px;top:1074.8px;font-size:12px;line-height:12px;font-weight:700;color:#d8d9e2">05:07</div><div class="t" style="left:251.7px;top:1074.8px;font-size:12px;line-height:12px;font-weight:700;color:#d8d9e2">05:09</div><div class="t" style="left:260.4px;top:1074.8px;font-size:12px;line-height:12px;font-weight:700;color:#d8d9e2">05:11</div><div class="t" style="left:269.1px;top:1074.8px;font-size:12px;line-height:12px;font-weight:700;color:#d8d9e2">05:13</div><div class="t" style="left:277.8px;top:1074.8px;font-size:12px;line-height:12px;font-weight:700;color:#d8d9e2">05:15</div><div class="t" style="left:286.5px;top:1074.8px;font-size:12px;line-height:12px;font-weight:700;color:#d8d9e2">05:17</div><div class="t" style="left:295.2px;top:1074.8px;font-size:12px;line-height:12px;font-weight:700;color:#d8d9e2">05:19</div><div class="t" style="left:303.9px;top:1074.8px;font-size:12px;line-height:12px;font-weight:700;color:#d8d9e2">05:21</div><div class="t" style="left:312.6px;top:1074.8px;font-size:12px;line-height:12px;font-weight:700;color:#d8d9e2">05:23</div><div class="t" style="left:321.3px;top:1074.8px;font-size:12px;line-height:12px;font-weight:700;color:#d8d9e2">05:25</div><div class="t" style="left:330.0px;top:1074.8px;font-size:12px;line-height:12px;font-weight:700;color:#d8d9e2">05:27</div><div class="t" style="left:338.7px;top:1074.8px;font-size:12px;line-height:12px;font-weight:700;color:#d8d9e2">05:29</div><div class="t" style="left:347.4px;top:1074.8px;font-size:12px;line-height:12px;font-weight:700;color:#d8d9e2">05:31</div><div class="t" style="left:356.1px;top:1074.8px;font-size:12px;line-height:12px;font-weight:700;color:#d8d9e2">06:33</div><div class="t" style="left:364.8px;top:1074.8px;font-size:12px;line-height:12px;font-weight:700;color:#d8d9e2">06:35</div><div class="t" style="left:373.5px;top:1074.8px;font-size:12px;line-height:12px;font-weight:700;color:#d8d9e2">06:37</div><div class="t" style="left:382.2px;top:1074.8px;font-size:12px;line-height:12px;font-weight:700;color:#d8d9e2">06:39</div><div class="t" style="left:390.9px;top:1074.8px;font-size:12px;line-height:12px;font-weight:700;color:#d8d9e2">06:41</div><div class="t" style="left:399.6px;top:1074.8px;font-size:12px;line-height:12px;font-weight:700;color:#d8d9e2">06:43</div><div class="t" style="left:408.3px;top:1074.8px;font-size:12px;line-height:12px;font-weight:700;color:#d8d9e2">06:45</div><div class="t" style="left:417.0px;top:1074.8px;font-size:12px;line-height:12px;font-weight:700;color:#d8d9e2">06:47</div><div class="t" style="left:425.7px;top:1074.8px;font-size:12px;line-height:12px;font-weight:700;color:#d8d9e2">06:49</div><div class="t" style="left:434.4px;top:1074.8px;font-size:12px;line-height:12px;font-weight:700;color:#d8d9e2">06:51</div><div class="t" style="left:443.1px;top:1074.8px;font-size:12px;line-height:12px;font-weight:700;color:#d8d9e2">06:53</div><div class="t" style="left:451.8px;top:1074.8px;font-size:12px;line-height:12px;font-weight:700;color:#d8d9e2">06:55</div><div class="t" style="left:460.5px;top:1074.8px;font-size:12px;line-height:12px;font-weight:700;color:#d8d9e2">06:57</div><div class="t" style="left:469.2px;top:1074.8px;font-size:12px;line-height:12px;font-weight:700;color:#d8d9e2">06:59</div><div class="t" style="left:477.9px;top:1074.8px;font-size:12px;line-height:12px;font-weight:700;color:#d8d9e2">06:01</div><div class="t" style="left:486.6px;top:1074.8px;font-size:12px;line-height:12px;font-weight:700;color:#d8d9e2">06:03</div><div class="t" style="left:495.3px;top:1074.8px;font-size:12px;line-height:12px;font-weight:700;color:#d8d9e2">06:05</div><div class="t" style="left:504.0px;top:1074.8px;font-size:12px;line-height:12px;font-weight:700;color:#d8d9e2">06:07</div><div class="t" style="left:512.7px;top:1074.8px;font-size:12px;line-height:12px;font-weight:700;color:#d8d9e2">06:09</div><div class="t" style="left:521.4px;top:1074.8px;font-size:12px;line-height:12px;font-weight:700;color:#d8d9e2">06:11</div><div class="t" style="left:530.1px;top:1074.8px;font-size:12px;line-height:12px;font-weight:700;color:#d8d9e2">06:13</div><div class="t" style="left:538.8px;top:1074.8px;font-size:12px;line-height:12px;font-weight:700;color:#d8d9e2">06:15</div><div class="t" style="left:547.5px;top:1074.8px;font-size:12px;line-height:12px;font-weight:700;color:#d8d9e2">06:17</div><div class="t" style="left:556.2px;top:1074.8px;font-size:12px;line-height:12px;font-weight:700;color:#d8d9e2">06:19</div><div class="t" style="left:564.9px;top:1074.8px;font-size:12px;line-height:12px;font-weight:700;color:#d8d9e2">06:21</div><div class="t" style="left:573.6px;top:1074.8px;font-size:12px;line-height:12px;font-weight:700;color:#d8d9e2">06:23</div><div class="t" style="left:582.3px;top:1074.8px;font-size:12px;line-height:12px;font-weight:700;color:#d8d9e2">06:25</div><div class="t" style="left:591.0px;top:1074.8px;font-size:12px;line-height:12px;font-weight:700;color:#d8d9e2">06:27</div><div class="t" style="left:599.7px;top:1074.8px;font-size:12px;line-height:12px;font-weight:700;color:#d8d9e2">06:29</div><div class="t" style="left:608.4px;top:1074.8px;font-size:12px;line-height:12px;font-weight:700;color:#d8d9e2">06:31</div><div class="t" style="left:617.1px;top:1074.8px;font-size:12px;line-height:12px;font-weight:700;color:#d8d9e2">07:33</div><div class="t" style="left:625.8px;top:1074.8px;font-size:12px;line-height:12px;font-weight:700;color:#d8d9e2">07:35</div><div class="t" style="left:634.5px;top:1074.8px;font-size:12px;line-height:12px;font-weight:700;color:#d8d9e2">07:37</div><div class="t" style="left:643.2px;top:1074.8px;font-size:12px;line-height:12px;font-weight:700;color:#d8d9e2">07:39</div><div class="t" style="left:651.9px;top:1074.8px;font-size:12px;line-height:12px;font-weight:700;color:#d8d9e2">07:41</div><div class="t" style="left:660.6px;top:1074.8px;font-size:12px;line-height:12px;font-weight:700;color:#d8d9e2">07:43</div><div class="t" style="left:669.3px;top:1074.8px;font-size:12px;line-height:12px;font-weight:700;color:#d8d9e2">07:45</div><div class="t" style="left:678.0px;top:1074.8px;font-size:12px;line-height:12px;font-weight:700;color:#d8d9e2">07:47</div><div class="t" style="left:686.7px;top:1074.8px;font-size:12px;line-height:12px;font-weight:700;color:#d8d9e2">07:49</div><div class="t" style="left:695.4px;top:1074.8px;font-size:12px;line-height:12px;font-weight:700;color:#d8d9e2">07:51</div><div class="t" style="left:704.1px;top:1074.8px;font-size:12px;line-height:12px;font-weight:700;color:#d8d9e2">07:53</div><div class="t" style="left:712.8px;top:1074.8px;font-size:12px;line-height:12px;font-weight:700;color:#d8d9e2">07:55</div><div class="t" style="left:721.5px;top:1074.8px;font-size:12px;line-height:12px;font-weight:700;color:#d8d9e2">07:57</div><div class="t" style="left:730.2px;top:1074.8px;font-size:12px;line-height:12px;font-weight:700;color:#d8d9e2">07:59</div><div class="t" style="left:738.9px;top:1074.8px;font-size:12px;line-height:12px;font-weight:700;color:#d8d9e2">07:01</div><div class="t" style="left:747.6px;top:1074.8px;font-size:12px;line-height:12px;font-weight:700;color:#d8d9e2">07:03</div><div class="t" style="left:756.3px;top:1074.8px;font-size:12px;line-height:12px;font-weight:700;color:#d8d9e2">07:05</div><div class="t" style="left:765.0px;top:1074.8px;font-size:12px;line-height:12px;font-weight:700;color:#d8d9e2">07:07</div><div class="t" style="left:773.7px;top:1074.8px;font-size:12px;line-height:12px;font-weight:700;color:#d8d9e2">07:09</div><div class="t" style="left:782.4px;top:1074.8px;font-size:12px;line-height:12px;font-weight:700;color:#d8d9e2">07:11</div><div class="t" style="left:791.1px;top:1074.8px;font-size:12px;line-height:12px;font-weight:700;color:#d8d9e2">07:13</div><div class="t" style="left:799.8px;top:1074.8px;font-size:12px;line-height:12px;font-weight:700;color:#d8d9e2">07:15</div><div class="t" style="left:808.5px;top:1074.8px;font-size:12px;line-height:12px;font-weight:700;color:#d8d9e2">07:17</div><div class="t" style="left:817.2px;top:1074.8px;font-size:12px;line-height:12px;font-weight:700;color:#d8d9e2">07:19</div><div class="t" style="left:825.9px;top:1074.8px;font-size:12px;line-height:12px;font-weight:700;color:#d8d9e2">07:21</div><div class="t" style="left:834.6px;top:1074.8px;font-size:12px;line-height:12px;font-weight:700;color:#d8d9e2">07:23</div><div class="t" style="left:843.3px;top:1074.8px;font-size:12px;line-height:12px;font-weight:700;color:#d8d9e2">07:25</div><div class="t" style="left:852.0px;top:1074.8px;font-size:12px;line-height:12px;font-weight:700;color:#d8d9e2">07:27</div><div class="t" style="left:860.7px;top:1074.8px;font-size:12px;line-height:12px;font-weight:700;color:#d8d9e2">07:29</div><div class="t" style="left:869.4px;top:1074.8px;font-size:12px;line-height:12px;font-weight:700;color:#d8d9e2">07:31</div><div class="t" style="left:878.0px;top:1074.8px;font-size:12px;line-height:12px;font-weight:700;color:#d8d9e2">07:33</div><div class="t" style="left:886.7px;top:1074.8px;font-size:12px;line-height:12px;font-weight:700;color:#d8d9e2">08:35</div><div class="t" style="left:895.4px;top:1074.8px;font-size:12px;line-height:12px;font-weight:700;color:#d8d9e2">08:37</div><div class="t" style="left:904.1px;top:1074.8px;font-size:12px;line-height:12px;font-weight:700;color:#d8d9e2">08:39</div><div class="t" style="left:912.8px;top:1074.8px;font-size:12px;line-height:12px;font-weight:700;color:#d8d9e2">08:41</div><div class="t" style="left:921.5px;top:1074.8px;font-size:12px;line-height:12px;font-weight:700;color:#d8d9e2">08:43</div><div class="t" style="left:930.2px;top:1074.8px;font-size:12px;line-height:12px;font-weight:700;color:#d8d9e2">08:45</div><div class="t" style="left:938.9px;top:1074.8px;font-size:12px;line-height:12px;font-weight:700;color:#d8d9e2">08:47</div><div class="t" style="left:947.6px;top:1074.8px;font-size:12px;line-height:12px;font-weight:700;color:#d8d9e2">08:49</div><div class="t" style="left:956.3px;top:1074.8px;font-size:12px;line-height:12px;font-weight:700;color:#d8d9e2">08:51</div><div class="t" style="left:965.0px;top:1074.8px;font-size:12px;line-height:12px;font-weight:700;color:#d8d9e2">08:53</div><div class="t" style="left:973.7px;top:1074.8px;font-size:12px;line-height:12px;font-weight:700;color:#d8d9e2">08:55</div><div class="t" style="left:982.4px;top:1074.8px;font-size:12px;line-height:12px;font-weight:700;color:#d8d9e2">08:57</div><div class="t" style="left:991.1px;top:1074.8px;font-size:12px;line-height:12px;font-weight:700;color:#d8d9e2">08:59</div><div class="t" style="left:999.8px;top:1074.8px;font-size:12px;line-height:12px;font-weight:700;color:#d8d9e2">08:01</div><div class="t" style="left:1008.5px;top:1074.8px;font-size:12px;line-height:12px;font-weight:700;color:#d8d9e2">08:03</div><div class="t" style="left:1017.2px;top:1074.8px;font-size:12px;line-height:12px;font-weight:700;color:#d8d9e2">08:05</div><div class="t" style="left:1025.9px;top:1074.8px;font-size:12px;line-height:12px;font-weight:700;color:#d8d9e2">08:07</div><div class="t" style="left:1034.6px;top:1074.8px;font-size:12px;line-height:12px;font-weight:700;color:#d8d9e2">08:09</div><div class="t" style="left:1043.3px;top:1074.8px;font-size:12px;line-height:12px;font-weight:700;color:#d8d9e2">08:11</div><div class="t" style="left:1052.0px;top:1074.8px;font-size:12px;line-height:12px;font-weight:700;color:#d8d9e2">08:13</div><div class="t" style="left:1060.7px;top:1074.8px;font-size:12px;line-height:12px;font-weight:700;color:#d8d9e2">08:15</div><div class="t" style="left:1069.4px;top:1074.8px;font-size:12px;line-height:12px;font-weight:700;color:#d8d9e2">08:17</div><div class="t" style="left:1078.1px;top:1074.8px;font-size:12px;line-height:12px;font-weight:700;color:#d8d9e2">08:19</div><div class="t" style="left:1086.8px;top:1074.8px;font-size:12px;line-height:12px;font-weight:700;color:#d8d9e2">08:21</div><div class="t" style="left:1095.5px;top:1074.8px;font-size:12px;line-height:12px;font-weight:700;color:#d8d9e2">08:23</div><div class="t" style="left:1104.2px;top:1074.8px;font-size:12px;line-height:12px;font-weight:700;color:#d8d9e2">08:25</div><div class="t" style="left:1112.9px;top:1074.8px;font-size:12px;line-height:12px;font-weight:700;color:#d8d9e2">08:27</div><div class="t" style="left:1121.6px;top:1074.8px;font-size:12px;line-height:12px;font-weight:700;color:#d8d9e2">08:29</div><div class="t" style="left:1130.3px;top:1074.8px;font-size:12px;line-height:12px;font-weight:700;color:#d8d9e2">08:31</div><div class="t" style="left:1139.0px;top:1074.8px;font-size:12px;line-height:12px;font-weight:700;color:#d8d9e2">08:33</div><div class="t" style="left:1147.7px;top:1074.8px;font-size:12px;line-height:12px;font-weight:700;color:#d8d9e2">09:35</div><div class="t" style="left:1156.4px;top:1074.8px;font-size:12px;line-height:12px;font-weight:700;color:#d8d9e2">09:37</div><div class="t" style="left:1165.1px;top:1074.8px;font-size:12px;line-height:12px;font-weight:700;color:#d8d9e2">09:39</div><div class="t" style="left:1173.8px;top:1074.8px;font-size:12px;line-height:12px;font-weight:700;color:#d8d9e2">09:41</div><div class="t" style="left:1182.5px;top:1074.8px;font-size:12px;line-height:12px;font-weight:700;color:#d8d9e2">09:43</div><div class="t" style="left:1191.2px;top:1074.8px;font-size:12px;line-height:12px;font-weight:700;color:#d8d9e2">09:45</div><div class="t" style="left:1199.9px;top:1074.8px;font-size:12px;line-height:12px;font-weight:700;color:#d8d9e2">09:47</div><div class="t" style="left:1208.6px;top:1074.8px;font-size:12px;line-height:12px;font-weight:700;color:#d8d9e2">09:49</div><div class="t" style="left:1217.3px;top:1074.8px;font-size:12px;line-height:12px;font-weight:700;color:#d8d9e2">09:51</div><div class="t" style="left:1226.0px;top:1074.8px;font-size:12px;line-height:12px;font-weight:700;color:#d8d9e2">09:53</div><div class="t" style="left:1234.7px;top:1074.8px;font-size:12px;line-height:12px;font-weight:700;color:#d8d9e2">09:55</div><div class="t" style="left:1243.4px;top:1074.8px;font-size:12px;line-height:12px;font-weight:700;color:#d8d9e2">09:57</div><div class="t" style="left:1252.1px;top:1074.8px;font-size:12px;line-height:12px;font-weight:700;color:#d8d9e2">09:59</div><div class="t" style="left:1260.8px;top:1074.8px;font-size:12px;line-height:12px;font-weight:700;color:#d8d9e2">09:01</div><div class="t" style="left:1269.5px;top:1074.8px;font-size:12px;line-height:12px;font-weight:700;color:#d8d9e2">09:03</div><div class="t" style="left:1278.2px;top:1074.8px;font-size:12px;line-height:12px;font-weight:700;color:#d8d9e2">09:05</div><div class="t" style="left:1286.9px;top:1074.8px;font-size:12px;line-height:12px;font-weight:700;color:#d8d9e2">09:07</div><div class="t" style="left:1295.6px;top:1074.8px;font-size:12px;line-height:12px;font-weight:700;color:#d8d9e2">09:09</div><div class="t" style="left:1304.3px;top:1074.8px;font-size:12px;line-height:12px;font-weight:700;color:#d8d9e2">09:11</div><div class="t" style="left:1313.0px;top:1074.8px;font-size:12px;line-height:12px;font-weight:700;color:#d8d9e2">09:13</div><div class="t" style="left:1321.7px;top:1074.8px;font-size:12px;line-height:12px;font-weight:700;color:#d8d9e2">09:15</div><div class="t" style="left:1330.4px;top:1074.8px;font-size:12px;line-height:12px;font-weight:700;color:#d8d9e2">09:17</div><div class="t" style="left:1339.1px;top:1074.8px;font-size:12px;line-height:12px;font-weight:700;color:#d8d9e2">09:19</div><div class="t" style="left:1347.8px;top:1074.8px;font-size:12px;line-height:12px;font-weight:700;color:#d8d9e2">09:21</div><div class="t" style="left:1356.5px;top:1074.8px;font-size:12px;line-height:12px;font-weight:700;color:#d8d9e2">09:23</div><div class="t" style="left:1365.2px;top:1074.8px;font-size:12px;line-height:12px;font-weight:700;color:#d8d9e2">09:25</div><div class="t" style="left:1373.9px;top:1074.8px;font-size:12px;line-height:12px;font-weight:700;color:#d8d9e2">09:27</div><div class="t" style="left:1382.6px;top:1074.8px;font-size:12px;line-height:12px;font-weight:700;color:#d8d9e2">09:29</div><div class="t" style="left:1391.3px;top:1074.8px;font-size:12px;line-height:12px;font-weight:700;color:#d8d9e2">09:31</div><div class="t" style="left:1400.0px;top:1074.8px;font-size:12px;line-height:12px;font-weight:700;color:#d8d9e2">09:33</div><div class="t" style="left:1408.7px;top:1074.8px;font-size:12px;line-height:12px;font-weight:700;color:#d8d9e2">09:35</div><div class="t" style="left:1417.4px;top:1074.8px;font-size:12px;line-height:12px;font-weight:700;color:#d8d9e2">10:37</div><div class="t" style="left:1426.1px;top:1074.8px;font-size:12px;line-height:12px;font-weight:700;color:#d8d9e2">10:39</div><div class="t" style="left:1434.8px;top:1074.8px;font-size:12px;line-height:12px;font-weight:700;color:#d8d9e2">10:41</div><div class="t" style="left:1443.5px;top:1074.8px;font-size:12px;line-height:12px;font-weight:700;color:#d8d9e2">10:43</div><div class="t" style="left:1452.2px;top:1074.8px;font-size:12px;line-height:12px;font-weight:700;color:#d8d9e2">10:45</div><div class="t" style="left:1460.9px;top:1074.8px;font-size:12px;line-height:12px;font-weight:700;color:#d8d9e2">10:47</div><div class="t" style="left:1469.6px;top:1074.8px;font-size:12px;line-height:12px;font-weight:700;color:#d8d9e2">10:49</div><div class="t" style="left:1478.3px;top:1074.8px;font-size:12px;line-height:12px;font-weight:700;color:#d8d9e2">10:51</div><div class="t" style="left:1487.0px;top:1074.8px;font-size:12px;line-height:12px;font-weight:700;color:#d8d9e2">10:53</div><div class="t" style="left:1495.7px;top:1074.8px;font-size:12px;line-height:12px;font-weight:700;color:#d8d9e2">10:55</div><div class="t" style="left:1504.4px;top:1074.8px;font-size:12px;line-height:12px;font-weight:700;color:#d8d9e2">10:57</div><div class="t" style="left:1513.1px;top:1074.8px;font-size:12px;line-height:12px;font-weight:700;color:#d8d9e2">10:59</div><div class="t" style="left:1521.8px;top:1074.8px;font-size:12px;line-height:12px;font-weight:700;color:#d8d9e2">10:01</div><div class="t" style="left:1530.5px;top:1074.8px;font-size:12px;line-height:12px;font-weight:700;color:#d8d9e2">10:03</div><div class="t" style="left:1539.2px;top:1074.8px;font-size:12px;line-height:12px;font-weight:700;color:#d8d9e2">10:05</div><div class="t" style="left:1547.9px;top:1074.8px;font-size:12px;line-height:12px;font-weight:700;color:#d8d9e2">10:07</div><div class="t" style="left:1556.6px;top:1074.8px;font-size:12px;line-height:12px;font-weight:700;color:#d8d9e2">10:09</div><div class="t" style="left:1565.3px;top:1074.8px;font-size:12px;line-height:12px;font-weight:700;color:#d8d9e2">10:11</div><div class="t" style="left:1574.0px;top:1074.8px;font-size:12px;line-height:12px;font-weight:700;color:#d8d9e2">10:13</div><div class="t" style="left:1582.7px;top:1074.8px;font-size:12px;line-height:12px;font-weight:700;color:#d8d9e2">10:15</div><div class="t" style="left:1591.4px;top:1074.8px;font-size:12px;line-height:12px;font-weight:700;color:#d8d9e2">10:17</div><div class="t" style="left:1600.1px;top:1074.8px;font-size:12px;line-height:12px;font-weight:700;color:#d8d9e2">10:19</div><div class="t" style="left:1608.8px;top:1074.8px;font-size:12px;line-height:12px;font-weight:700;color:#d8d9e2">10:21</div><div class="t" style="left:1617.5px;top:1074.8px;font-size:12px;line-height:12px;font-weight:700;color:#d8d9e2">10:23</div><div class="t" style="left:1626.2px;top:1074.8px;font-size:12px;line-height:12px;font-weight:700;color:#d8d9e2">10:25</div><div class="t" style="left:1634.9px;top:1074.8px;font-size:12px;line-height:12px;font-weight:700;color:#d8d9e2">10:27</div><div class="t" style="left:1643.6px;top:1074.8px;font-size:12px;line-height:12px;font-weight:700;color:#d8d9e2">10:29</div><div class="t" style="left:1652.3px;top:1074.8px;font-size:12px;line-height:12px;font-weight:700;color:#d8d9e2">10:31</div><div class="t" style="left:1661.0px;top:1074.8px;font-size:12px;line-height:12px;font-weight:700;color:#d8d9e2">10:33</div><div class="t" style="left:1669.7px;top:1074.8px;font-size:12px;line-height:12px;font-weight:700;color:#d8d9e2">10:35</div><div class="t" style="top:1074.84px;font-size:12px;line-height:12px;color:#d0d1da;left:88.00px;">0</div><div style="position:absolute;left:85px;top:1116px;width:1612px;height:1px;background:#212328;"></div><div style="position:absolute;left:85px;top:1140px;width:1612px;height:1px;background:#212328;"></div><div style="position:absolute;left:85px;top:1163px;width:1612px;height:1px;background:#212328;"></div><div class="t" style="top:1097.84px;font-size:12px;line-height:12px;color:#6e9fff;font-weight:700;right:83.80px;transform:scaleX(0.95);transform-origin:right center;">Last *</div><div class="t" style="top:1097.84px;font-size:12px;line-height:12px;color:#6e9fff;font-weight:700;right:37.20px;transform:scaleX(0.95);transform-origin:right center;">Mean</div><div style="position:absolute;left:92px;top:1126px;width:14px;height:4px;background:#73bf69;border-radius:1px;"></div><div class="t" style="top:1121.44px;font-size:12px;line-height:12px;color:#ccccdc;left:113.80px;">Upload: Image</div><div class="t" style="top:1121.44px;font-size:12px;line-height:12px;color:#ccccdc;right:83.80px;">1</div><div class="t" style="top:1121.44px;font-size:12px;line-height:12px;color:#ccccdc;right:37.20px;">1</div><div style="position:absolute;left:92px;top:1150px;width:14px;height:4px;background:#fade2a;border-radius:1px;"></div><div class="t" style="top:1145.54px;font-size:12px;line-height:12px;color:#ccccdc;left:113.80px;">Upload: Night</div><div class="t" style="top:1145.54px;font-size:12px;line-height:12px;color:#ccccdc;right:83.80px;">1</div><div class="t" style="top:1145.54px;font-size:12px;line-height:12px;color:#ccccdc;right:37.20px;">1</div><div style="position:absolute;left:92px;top:1173px;width:14px;height:4px;background:#8ab8ff;border-radius:1px;"></div><div class="t" style="top:1168.74px;font-size:12px;line-height:12px;color:#ccccdc;left:113.80px;">Upload: Night</div><div class="t" style="top:1168.74px;font-size:12px;line-height:12px;color:#ccccdc;right:83.80px;">1</div><div class="t" style="top:1168.74px;font-size:12px;line-height:12px;color:#ccccdc;right:37.20px;">1</div>
</body></html>
